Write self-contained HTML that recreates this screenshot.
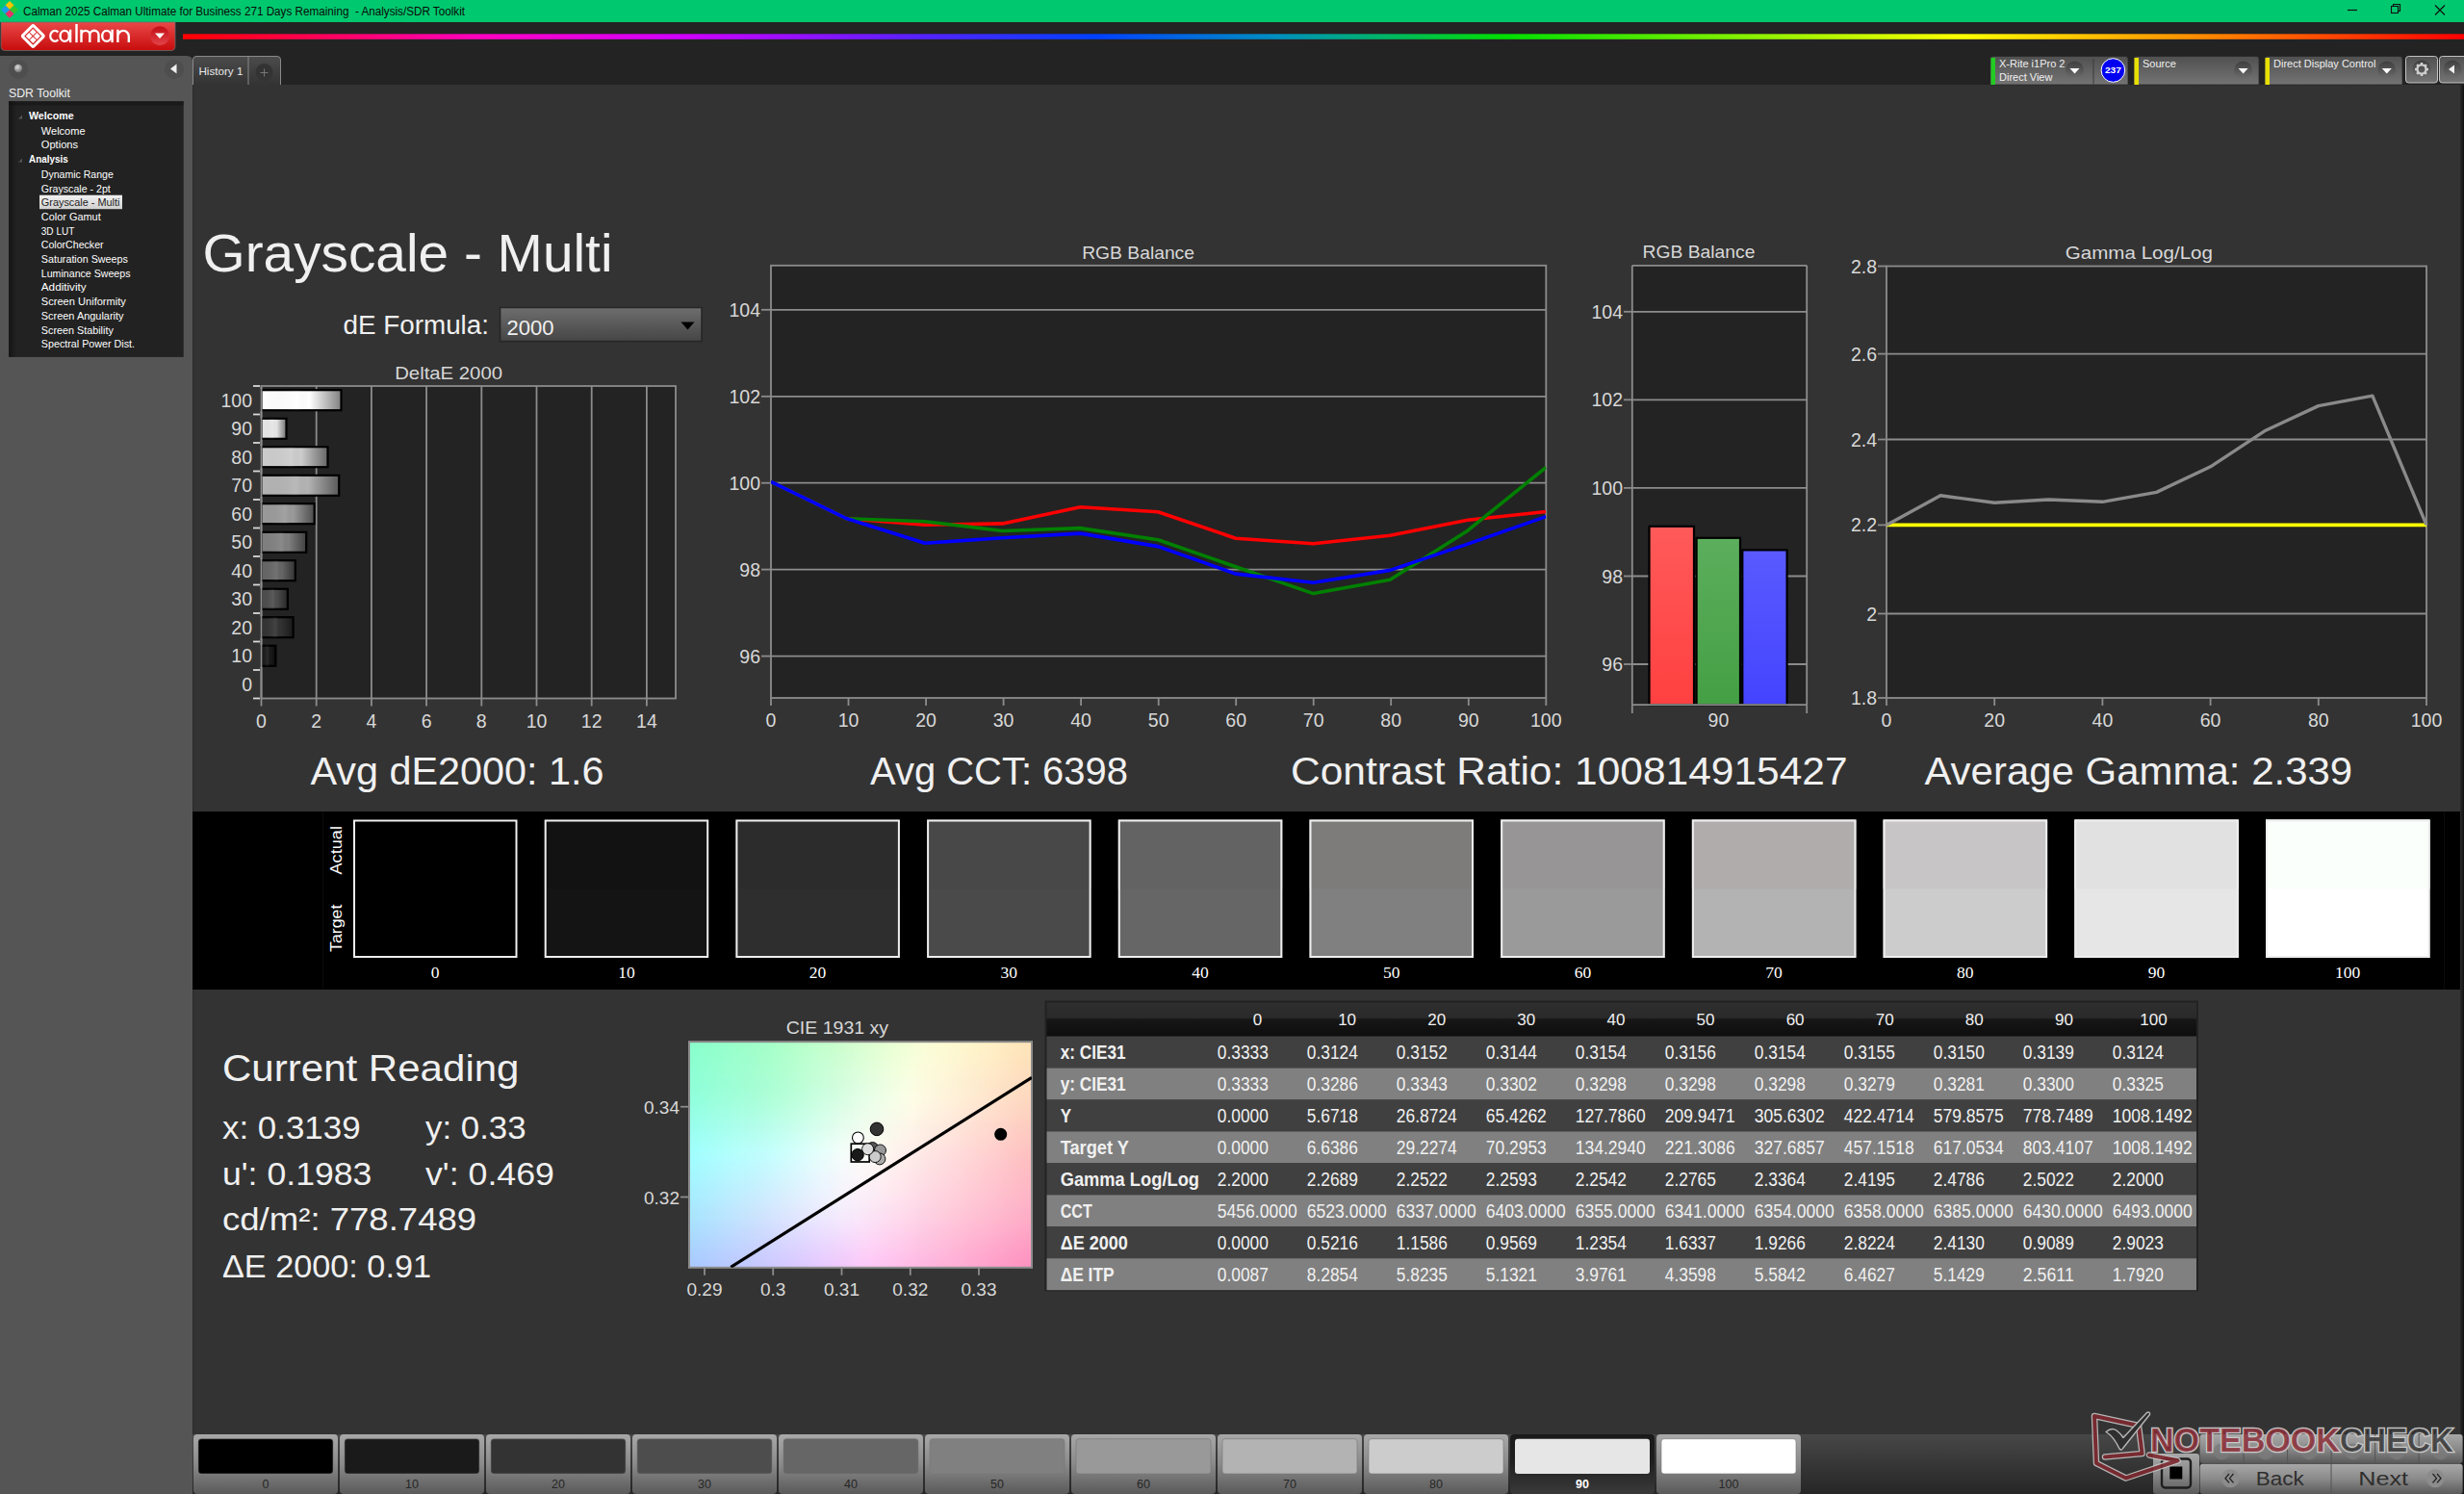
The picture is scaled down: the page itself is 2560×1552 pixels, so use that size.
<!DOCTYPE html>
<html><head><meta charset="utf-8"><style>
html,body{margin:0;padding:0;width:2560px;height:1552px;overflow:hidden;background:#333;}
svg{display:block;font-family:"Liberation Sans", sans-serif;}
.cie{width:356px;height:235px;background:
radial-gradient(ellipse 90px 70px at 47% 52%, rgba(255,255,255,1), rgba(255,255,255,0)),
radial-gradient(ellipse 130px 110px at 100% 100%, rgba(255,140,190,1), rgba(255,140,190,0)),
radial-gradient(ellipse 140px 100px at 75% 10%, rgba(255,255,200,1), rgba(255,255,200,0)),
radial-gradient(ellipse 120px 120px at 0% 0%, rgba(130,255,200,1), rgba(130,255,200,0)),
radial-gradient(ellipse 130px 110px at 0% 100%, rgba(170,200,255,1), rgba(170,200,255,0)),
linear-gradient(to right, #b0ffff 0%, #f0f0ff 45%, #ffc0d8 100%);}
</style></head><body>
<svg width="2560" height="1552" viewBox="0 0 2560 1552">

<defs>
<linearGradient id="rainbow" x1="0" y1="0" x2="1" y2="0">
 <stop offset="0" stop-color="#ff0000"/>
 <stop offset="0.13" stop-color="#ff00c0"/>
 <stop offset="0.22" stop-color="#d000ff"/>
 <stop offset="0.32" stop-color="#5a20ff"/>
 <stop offset="0.40" stop-color="#0040ff"/>
 <stop offset="0.48" stop-color="#0090c0"/>
 <stop offset="0.58" stop-color="#00e000"/>
 <stop offset="0.68" stop-color="#80f000"/>
 <stop offset="0.78" stop-color="#ffff00"/>
 <stop offset="0.88" stop-color="#ff9000"/>
 <stop offset="1" stop-color="#ff0000"/>
</linearGradient>
<linearGradient id="calred" x1="0" y1="0" x2="0" y2="1">
 <stop offset="0" stop-color="#e94848"/>
 <stop offset="1" stop-color="#c80c0c"/>
</linearGradient>
<linearGradient id="ddbox" x1="0" y1="0" x2="0" y2="1">
 <stop offset="0" stop-color="#6e6e6e"/>
 <stop offset="1" stop-color="#454545"/>
</linearGradient>
<linearGradient id="thead" x1="0" y1="0" x2="0" y2="1">
 <stop offset="0" stop-color="#2e2e2e"/>
 <stop offset="0.45" stop-color="#2a2a2a"/>
 <stop offset="0.5" stop-color="#161616"/>
 <stop offset="1" stop-color="#0e0e0e"/>
</linearGradient>
<linearGradient id="ctrl" x1="0" y1="0" x2="0" y2="1">
 <stop offset="0" stop-color="#505050"/>
 <stop offset="1" stop-color="#747474"/>
</linearGradient>
<linearGradient id="knobg" x1="0" y1="0" x2="0" y2="1">
 <stop offset="0" stop-color="#3e3e3e"/>
 <stop offset="1" stop-color="#6e6e6e"/>
</linearGradient>
<linearGradient id="btn" x1="0" y1="0" x2="0" y2="1">
 <stop offset="0" stop-color="#a8a8a8"/>
 <stop offset="0.5" stop-color="#8a8a8a"/>
 <stop offset="1" stop-color="#5a5a5a"/>
</linearGradient>
<linearGradient id="selbtn" x1="0" y1="0" x2="0" y2="1">
 <stop offset="0" stop-color="#1a1a1a"/>
 <stop offset="0.45" stop-color="#1f1f1f"/>
 <stop offset="1" stop-color="#3a3a3a"/>
</linearGradient>
<linearGradient id="tabg" x1="0" y1="0" x2="0" y2="1">
 <stop offset="0" stop-color="#4c4c4c"/>
 <stop offset="1" stop-color="#333333"/>
</linearGradient>
<linearGradient id="selitem" x1="0" y1="0" x2="0" y2="1">
 <stop offset="0" stop-color="#f2f2f2"/>
 <stop offset="1" stop-color="#cfcfcf"/>
</linearGradient>
<linearGradient id="treesh" x1="0" y1="0" x2="1" y2="0">
 <stop offset="0" stop-color="#111" stop-opacity="0.8"/>
 <stop offset="1" stop-color="#111" stop-opacity="0"/>
</linearGradient>
<linearGradient id="bbar" x1="0" y1="0" x2="0" y2="1">
 <stop offset="0" stop-color="#474747"/>
 <stop offset="1" stop-color="#262626"/>
</linearGradient>
<linearGradient id="barR" x1="0" y1="0" x2="0" y2="1"><stop offset="0" stop-color="#ff5a5a"/><stop offset="1" stop-color="#ff4040"/></linearGradient>
<linearGradient id="barG" x1="0" y1="0" x2="0" y2="1"><stop offset="0" stop-color="#5cae5c"/><stop offset="1" stop-color="#44a044"/></linearGradient>
<linearGradient id="barB" x1="0" y1="0" x2="0" y2="1"><stop offset="0" stop-color="#5a5aff"/><stop offset="1" stop-color="#4444ff"/></linearGradient>
<radialGradient id="knob" cx="0.5" cy="0.35" r="0.6">
 <stop offset="0" stop-color="#6a6a6a"/>
 <stop offset="1" stop-color="#3c3c3c"/>
</radialGradient>
<radialGradient id="ball" cx="0.4" cy="0.35" r="0.6">
 <stop offset="0" stop-color="#e0e0e0"/>
 <stop offset="1" stop-color="#777"/>
</radialGradient>
<linearGradient id="redknob" x1="0" y1="0" x2="0" y2="1">
 <stop offset="0" stop-color="#c20c14"/>
 <stop offset="1" stop-color="#e2444a"/>
</linearGradient>
<linearGradient id="rightstrip" x1="0" y1="0" x2="1" y2="0">
 <stop offset="0" stop-color="#2a2a2a"/>
 <stop offset="1" stop-color="#111"/>
</linearGradient>
</defs>

<defs><linearGradient id="bg100" x1="0" y1="0" x2="1" y2="0"><stop offset="0" stop-color="#000" stop-opacity="0"/><stop offset="0.45" stop-color="#fff" stop-opacity="0.08"/><stop offset="0.6" stop-color="#000" stop-opacity="0"/><stop offset="1" stop-color="#000" stop-opacity="0.5"/></linearGradient><linearGradient id="bg90" x1="0" y1="0" x2="1" y2="0"><stop offset="0" stop-color="#000" stop-opacity="0"/><stop offset="0.45" stop-color="#fff" stop-opacity="0.08"/><stop offset="0.6" stop-color="#000" stop-opacity="0"/><stop offset="1" stop-color="#000" stop-opacity="0.5"/></linearGradient><linearGradient id="bg80" x1="0" y1="0" x2="1" y2="0"><stop offset="0" stop-color="#000" stop-opacity="0"/><stop offset="0.45" stop-color="#fff" stop-opacity="0.08"/><stop offset="0.6" stop-color="#000" stop-opacity="0"/><stop offset="1" stop-color="#000" stop-opacity="0.5"/></linearGradient><linearGradient id="bg70" x1="0" y1="0" x2="1" y2="0"><stop offset="0" stop-color="#000" stop-opacity="0"/><stop offset="0.45" stop-color="#fff" stop-opacity="0.08"/><stop offset="0.6" stop-color="#000" stop-opacity="0"/><stop offset="1" stop-color="#000" stop-opacity="0.5"/></linearGradient><linearGradient id="bg60" x1="0" y1="0" x2="1" y2="0"><stop offset="0" stop-color="#000" stop-opacity="0"/><stop offset="0.45" stop-color="#fff" stop-opacity="0.08"/><stop offset="0.6" stop-color="#000" stop-opacity="0"/><stop offset="1" stop-color="#000" stop-opacity="0.5"/></linearGradient><linearGradient id="bg50" x1="0" y1="0" x2="1" y2="0"><stop offset="0" stop-color="#000" stop-opacity="0"/><stop offset="0.45" stop-color="#fff" stop-opacity="0.08"/><stop offset="0.6" stop-color="#000" stop-opacity="0"/><stop offset="1" stop-color="#000" stop-opacity="0.5"/></linearGradient><linearGradient id="bg40" x1="0" y1="0" x2="1" y2="0"><stop offset="0" stop-color="#000" stop-opacity="0"/><stop offset="0.45" stop-color="#fff" stop-opacity="0.08"/><stop offset="0.6" stop-color="#000" stop-opacity="0"/><stop offset="1" stop-color="#000" stop-opacity="0.5"/></linearGradient><linearGradient id="bg30" x1="0" y1="0" x2="1" y2="0"><stop offset="0" stop-color="#000" stop-opacity="0"/><stop offset="0.45" stop-color="#fff" stop-opacity="0.08"/><stop offset="0.6" stop-color="#000" stop-opacity="0"/><stop offset="1" stop-color="#000" stop-opacity="0.5"/></linearGradient><linearGradient id="bg20" x1="0" y1="0" x2="1" y2="0"><stop offset="0" stop-color="#000" stop-opacity="0"/><stop offset="0.45" stop-color="#fff" stop-opacity="0.08"/><stop offset="0.6" stop-color="#000" stop-opacity="0"/><stop offset="1" stop-color="#000" stop-opacity="0.5"/></linearGradient><linearGradient id="bg10" x1="0" y1="0" x2="1" y2="0"><stop offset="0" stop-color="#000" stop-opacity="0"/><stop offset="0.45" stop-color="#fff" stop-opacity="0.08"/><stop offset="0.6" stop-color="#000" stop-opacity="0"/><stop offset="1" stop-color="#000" stop-opacity="0.5"/></linearGradient></defs>
<rect x="0.0" y="0.0" width="2560.0" height="1552.0" fill="#333333"/>
<rect x="0.0" y="0.0" width="2560.0" height="23.0" fill="#00c86e"/>
<rect x="0.0" y="23.0" width="2560.0" height="65.0" fill="#232323"/>
<rect x="200.0" y="88.0" width="2356.0" height="1464.0" fill="#333333"/>
<rect x="2556.0" y="88.0" width="4.0" height="1464.0" fill="url(#rightstrip)"/>
<path d="M0,58 H194 Q200,58 200,64 V1552 H0 Z" fill="#555555"/>
<line x1="200.5" y1="88.0" x2="200.5" y2="1552.0" stroke="#2b2b2b" stroke-width="1"/>
<rect x="6.8" y="2.3" width="6.4" height="6.4" fill="#f5c400" transform="rotate(45 10 5.5)"/>
<rect x="2.3" y="6.8" width="6.4" height="6.4" fill="#1aa0e8" transform="rotate(45 5.5 10)"/>
<rect x="11.3" y="6.8" width="6.4" height="6.4" fill="#2ec82e" transform="rotate(45 14.5 10)"/>
<rect x="6.8" y="11.3" width="6.4" height="6.4" fill="#e8306a" transform="rotate(45 10 14.5)"/>
<text x="24.0" y="16.0" font-size="12" fill="#0a0a0a" textLength="459.0" lengthAdjust="spacingAndGlyphs">Calman 2025 Calman Ultimate for Business 271 Days Remaining  - Analysis/SDR Toolkit</text>
<line x1="2439.0" y1="10.5" x2="2449.0" y2="10.5" stroke="#111" stroke-width="1.2"/>
<rect x="2484.5" y="6.5" width="7" height="7" fill="none" stroke="#111" stroke-width="1.1"/>
<path d="M2486.5,6.5 V4.5 H2493.5 V11.5 H2491.5" fill="none" stroke="#111" stroke-width="1.1"/>
<path d="M2530,5.5 L2540,15.5 M2540,5.5 L2530,15.5" stroke="#111" stroke-width="1.2"/>
<path d="M1,23 H182 V48.5 Q182,52.5 178,52.5 H5 Q1,52.5 1,48.5 Z" fill="url(#calred)" stroke="#6a6a6a" stroke-width="0.8"/>
<g transform="translate(34.3,37.5) rotate(45)"><rect x="-8" y="-8" width="16" height="16" rx="1.2" fill="none" stroke="#fff" stroke-width="3"/><rect x="-5.3" y="-5.3" width="4.8" height="4.8" fill="#fff"/><rect x="0.5" y="-5.3" width="4.8" height="4.8" fill="#fff"/><rect x="-5.3" y="0.5" width="4.8" height="4.8" fill="#fff"/><rect x="0.5" y="0.5" width="4.8" height="4.8" fill="#fff"/></g>
<g fill="none" stroke="#fff" stroke-width="2.4"><path d="M60.3,33.6 A4.6,5.5 0 1 0 60.3,41.2"/><ellipse cx="67.2" cy="37.4" rx="4.6" ry="5.5"/><path d="M73.1,30.7 V44.1"/><path d="M79.5,25 V44.1"/><path d="M84.5,30.7 V44.1 M84.5,36.3 A4.4,4.4 0 0 1 93.3,36.3 V44.1 M93.3,36.3 A4.6,4.6 0 0 1 102.5,36.3 V44.1"/><ellipse cx="110.8" cy="37.4" rx="4.6" ry="5.5"/><path d="M116.6,30.7 V44.1"/><path d="M122.4,30.7 V44.1 M122.4,37.6 A5.7,5.7 0 0 1 133.8,37.6 V44.1"/></g>
<circle cx="166" cy="37.2" r="10" fill="url(#redknob)"/>
<path d="M161,34.5 H171 L166,40 Z" fill="#fff"/>
<rect x="190.0" y="35.3" width="2370.0" height="5.5" fill="url(#rainbow)"/>
<circle cx="19" cy="72" r="10" fill="#4e4e4e"/>
<circle cx="19" cy="71" r="4.2" fill="url(#ball)"/>
<circle cx="181" cy="72" r="10" fill="#4e4e4e"/>
<path d="M183.5,66.5 V76.5 L177,71.5 Z" fill="#f0f0f0"/>
<text x="9.0" y="100.7" font-size="12.5" fill="#f0f0f0" textLength="64.0" lengthAdjust="spacingAndGlyphs">SDR Toolkit</text>
<rect x="9.2" y="105.2" width="181.5" height="265.7" fill="#222222"/>
<rect x="9.2" y="105.2" width="181.5" height="4" fill="#151515" opacity="0.6"/>
<rect x="9.2" y="105.2" width="8" height="265.7" fill="url(#treesh)"/>
<path d="M19,123.5 H23 V119.5 Z" fill="#555"/>
<path d="M19,168.5 H23 V164.5 Z" fill="#555"/>
<text x="30.0" y="124.2" font-size="10.8" fill="#ffffff" font-weight="bold" textLength="46.6" lengthAdjust="spacingAndGlyphs">Welcome</text>
<text x="42.8" y="140.1" font-size="10.8" fill="#ffffff" textLength="45.8" lengthAdjust="spacingAndGlyphs">Welcome</text>
<text x="42.8" y="154.2" font-size="10.8" fill="#ffffff" textLength="38.3" lengthAdjust="spacingAndGlyphs">Options</text>
<text x="30.0" y="169.3" font-size="10.8" fill="#ffffff" font-weight="bold" textLength="40.7" lengthAdjust="spacingAndGlyphs">Analysis</text>
<text x="42.8" y="185.0" font-size="10.8" fill="#ffffff" textLength="75.0" lengthAdjust="spacingAndGlyphs">Dynamic Range</text>
<text x="42.8" y="199.7" font-size="10.8" fill="#ffffff" textLength="72.0" lengthAdjust="spacingAndGlyphs">Grayscale - 2pt</text>
<rect x="41.0" y="202.7" width="86.0" height="14.5" fill="url(#selitem)"/>
<text x="42.8" y="214.4" font-size="10.8" fill="#222" textLength="81.7" lengthAdjust="spacingAndGlyphs">Grayscale - Multi</text>
<text x="42.8" y="229.0" font-size="10.8" fill="#ffffff" textLength="61.9" lengthAdjust="spacingAndGlyphs">Color Gamut</text>
<text x="42.8" y="243.7" font-size="10.8" fill="#ffffff" textLength="34.5" lengthAdjust="spacingAndGlyphs">3D LUT</text>
<text x="42.8" y="258.4" font-size="10.8" fill="#ffffff" textLength="64.8" lengthAdjust="spacingAndGlyphs">ColorChecker</text>
<text x="42.8" y="273.1" font-size="10.8" fill="#ffffff" textLength="90.0" lengthAdjust="spacingAndGlyphs">Saturation Sweeps</text>
<text x="42.8" y="287.8" font-size="10.8" fill="#ffffff" textLength="92.7" lengthAdjust="spacingAndGlyphs">Luminance Sweeps</text>
<text x="42.8" y="302.4" font-size="10.8" fill="#ffffff" textLength="46.9" lengthAdjust="spacingAndGlyphs">Additivity</text>
<text x="42.8" y="317.1" font-size="10.8" fill="#ffffff" textLength="88.1" lengthAdjust="spacingAndGlyphs">Screen Uniformity</text>
<text x="42.8" y="331.8" font-size="10.8" fill="#ffffff" textLength="85.7" lengthAdjust="spacingAndGlyphs">Screen Angularity</text>
<text x="42.8" y="346.5" font-size="10.8" fill="#ffffff" textLength="75.0" lengthAdjust="spacingAndGlyphs">Screen Stability</text>
<text x="42.8" y="361.2" font-size="10.8" fill="#ffffff" textLength="97.2" lengthAdjust="spacingAndGlyphs">Spectral Power Dist.</text>
<path d="M200.5,88 V62 Q200.5,58.5 204,58.5 H288 Q291.5,58.5 291.5,62 V88" fill="url(#tabg)" stroke="#8a8a8a" stroke-width="1"/>
<line x1="258.0" y1="59.0" x2="258.0" y2="88.0" stroke="#8a8a8a" stroke-width="1"/>
<text x="206.4" y="78.0" font-size="11.5" fill="#e8e8e8" textLength="46.0" lengthAdjust="spacingAndGlyphs">History 1</text>
<circle cx="274.5" cy="75" r="9" fill="#333"/>
<path d="M270.5,75.5 H278.5 M274.5,71.5 V79.5" stroke="#777" stroke-width="1"/>
<path d="M2068,88 V61 Q2068,58.5 2071,58.5 H2208 Q2211,58.5 2211,61 V88 Z" fill="url(#ctrl)" stroke="#2a2a2a" stroke-width="0.8"/>
<rect x="2068.5" y="60.0" width="4.5" height="28.0" fill="#22cc22"/>
<text x="2077.0" y="69.8" font-size="11" fill="#f0f0f0">X-Rite i1Pro 2</text>
<text x="2077.0" y="83.6" font-size="11" fill="#f0f0f0">Direct View</text>
<circle cx="2155.5" cy="73" r="9.5" fill="url(#knobg)"/>
<path d="M2150.5,71 H2160.5 L2155.5,76.5 Z" fill="#fff"/>
<line x1="2175.0" y1="61.0" x2="2175.0" y2="87.0" stroke="#3a3a3a" stroke-width="1"/>
<circle cx="2195.4" cy="73" r="12.3" fill="#0000f0" stroke="#fff" stroke-width="1"/>
<text x="2195.4" y="76.4" font-size="9.5" fill="#fff" font-weight="bold" text-anchor="middle" textLength="17.0" lengthAdjust="spacingAndGlyphs">237</text>
<path d="M2217,88 V61 Q2217,58.5 2220,58.5 H2344 Q2347,58.5 2347,61 V88 Z" fill="url(#ctrl)" stroke="#2a2a2a" stroke-width="0.8"/>
<rect x="2217.5" y="60.0" width="4.5" height="28.0" fill="#e8e000"/>
<text x="2226.0" y="69.8" font-size="11" fill="#f0f0f0">Source</text>
<circle cx="2330.6" cy="73" r="9.5" fill="url(#knobg)"/>
<path d="M2325.6,71 H2335.6 L2330.6,76.5 Z" fill="#fff"/>
<path d="M2353,88 V61 Q2353,58.5 2356,58.5 H2493 Q2496,58.5 2496,61 V88 Z" fill="url(#ctrl)" stroke="#2a2a2a" stroke-width="0.8"/>
<rect x="2353.5" y="60.0" width="4.5" height="28.0" fill="#e8e000"/>
<text x="2362.0" y="69.8" font-size="11" fill="#f0f0f0">Direct Display Control</text>
<circle cx="2479.8" cy="73" r="9.5" fill="url(#knobg)"/>
<path d="M2474.8,71 H2484.8 L2479.8,76.5 Z" fill="#fff"/>
<rect x="2499.5" y="58.5" width="33" height="27.5" rx="3" fill="url(#ctrl)" stroke="#d0d0d0" stroke-width="0.9"/>
<circle cx="2516" cy="72" r="9.5" fill="url(#knobg)"/>
<rect x="2514.8" y="65" width="2.4" height="3" fill="#cfcfcf" transform="rotate(0 2516 72)"/>
<rect x="2514.8" y="65" width="2.4" height="3" fill="#cfcfcf" transform="rotate(45 2516 72)"/>
<rect x="2514.8" y="65" width="2.4" height="3" fill="#cfcfcf" transform="rotate(90 2516 72)"/>
<rect x="2514.8" y="65" width="2.4" height="3" fill="#cfcfcf" transform="rotate(135 2516 72)"/>
<rect x="2514.8" y="65" width="2.4" height="3" fill="#cfcfcf" transform="rotate(180 2516 72)"/>
<rect x="2514.8" y="65" width="2.4" height="3" fill="#cfcfcf" transform="rotate(225 2516 72)"/>
<rect x="2514.8" y="65" width="2.4" height="3" fill="#cfcfcf" transform="rotate(270 2516 72)"/>
<rect x="2514.8" y="65" width="2.4" height="3" fill="#cfcfcf" transform="rotate(315 2516 72)"/>
<circle cx="2516" cy="72" r="4.6" fill="none" stroke="#cfcfcf" stroke-width="2.4"/>
<rect x="2534.5" y="58.5" width="30" height="27.5" rx="3" fill="url(#ctrl)" stroke="#d0d0d0" stroke-width="0.9"/>
<circle cx="2548" cy="72" r="9.5" fill="url(#knobg)"/>
<path d="M2550,67.5 V76.5 L2544,72 Z" fill="#f0f0f0"/>
<text x="210.5" y="281.8" font-size="56.3" fill="#f0f0f0" textLength="426.0" lengthAdjust="spacingAndGlyphs">Grayscale - Multi</text>
<text x="356.5" y="347.2" font-size="27" fill="#f0f0f0" textLength="151.5" lengthAdjust="spacingAndGlyphs">dE Formula:</text>
<rect x="519.6" y="319.5" width="209.4" height="35.1" fill="url(#ddbox)" stroke="#262626" stroke-width="1.5"/>
<text x="526.6" y="348.4" font-size="22.5" fill="#f0f0f0" textLength="49.0" lengthAdjust="spacingAndGlyphs">2000</text>
<path d="M707.5,334.5 H721.5 L714.5,342.5 Z" fill="#000"/>
<text x="410.2" y="393.5" font-size="19" fill="#d8d8d8" textLength="111.8" lengthAdjust="spacingAndGlyphs">DeltaE 2000</text>
<rect x="271.5" y="401.0" width="430.5" height="324.5" fill="#232323"/>
<line x1="328.7" y1="401.0" x2="328.7" y2="725.5" stroke="#8c8c8c" stroke-width="1.8"/>
<line x1="385.9" y1="401.0" x2="385.9" y2="725.5" stroke="#8c8c8c" stroke-width="1.8"/>
<line x1="443.1" y1="401.0" x2="443.1" y2="725.5" stroke="#8c8c8c" stroke-width="1.8"/>
<line x1="500.3" y1="401.0" x2="500.3" y2="725.5" stroke="#8c8c8c" stroke-width="1.8"/>
<line x1="557.5" y1="401.0" x2="557.5" y2="725.5" stroke="#8c8c8c" stroke-width="1.8"/>
<line x1="614.7" y1="401.0" x2="614.7" y2="725.5" stroke="#8c8c8c" stroke-width="1.8"/>
<line x1="671.9" y1="401.0" x2="671.9" y2="725.5" stroke="#8c8c8c" stroke-width="1.8"/>
<rect x="271.5" y="401" width="430.5" height="324.5" fill="none" stroke="#8c8c8c" stroke-width="1.8"/>
<line x1="263.0" y1="401.0" x2="270.0" y2="401.0" stroke="#d8d8d8" stroke-width="1.8"/>
<text x="262.0" y="422.8" font-size="19.5" fill="#d8d8d8" text-anchor="end">100</text>
<rect x="271.5" y="405.2" width="83.0" height="21" fill="#ffffff" stroke="#000" stroke-width="2.2"/>
<rect x="271.5" y="405.2" width="83.0" height="21" fill="url(#bg100)"/>
<line x1="263.0" y1="430.5" x2="270.0" y2="430.5" stroke="#d8d8d8" stroke-width="1.8"/>
<text x="262.0" y="452.2" font-size="19.5" fill="#d8d8d8" text-anchor="end">90</text>
<rect x="271.5" y="434.8" width="26.0" height="21" fill="#e6e6e6" stroke="#000" stroke-width="2.2"/>
<rect x="271.5" y="434.8" width="26.0" height="21" fill="url(#bg90)"/>
<line x1="263.0" y1="460.0" x2="270.0" y2="460.0" stroke="#d8d8d8" stroke-width="1.8"/>
<text x="262.0" y="481.8" font-size="19.5" fill="#d8d8d8" text-anchor="end">80</text>
<rect x="271.5" y="464.2" width="69.0" height="21" fill="#cccccc" stroke="#000" stroke-width="2.2"/>
<rect x="271.5" y="464.2" width="69.0" height="21" fill="url(#bg80)"/>
<line x1="263.0" y1="489.5" x2="270.0" y2="489.5" stroke="#d8d8d8" stroke-width="1.8"/>
<text x="262.0" y="511.2" font-size="19.5" fill="#d8d8d8" text-anchor="end">70</text>
<rect x="271.5" y="493.8" width="80.7" height="21" fill="#b3b3b3" stroke="#000" stroke-width="2.2"/>
<rect x="271.5" y="493.8" width="80.7" height="21" fill="url(#bg70)"/>
<line x1="263.0" y1="519.0" x2="270.0" y2="519.0" stroke="#d8d8d8" stroke-width="1.8"/>
<text x="262.0" y="540.8" font-size="19.5" fill="#d8d8d8" text-anchor="end">60</text>
<rect x="271.5" y="523.2" width="55.1" height="21" fill="#9a9a9a" stroke="#000" stroke-width="2.2"/>
<rect x="271.5" y="523.2" width="55.1" height="21" fill="url(#bg60)"/>
<line x1="263.0" y1="548.5" x2="270.0" y2="548.5" stroke="#d8d8d8" stroke-width="1.8"/>
<text x="262.0" y="570.2" font-size="19.5" fill="#d8d8d8" text-anchor="end">50</text>
<rect x="271.5" y="552.8" width="46.7" height="21" fill="#808080" stroke="#000" stroke-width="2.2"/>
<rect x="271.5" y="552.8" width="46.7" height="21" fill="url(#bg50)"/>
<line x1="263.0" y1="578.0" x2="270.0" y2="578.0" stroke="#d8d8d8" stroke-width="1.8"/>
<text x="262.0" y="599.8" font-size="19.5" fill="#d8d8d8" text-anchor="end">40</text>
<rect x="271.5" y="582.2" width="35.3" height="21" fill="#666666" stroke="#000" stroke-width="2.2"/>
<rect x="271.5" y="582.2" width="35.3" height="21" fill="url(#bg40)"/>
<line x1="263.0" y1="607.5" x2="270.0" y2="607.5" stroke="#d8d8d8" stroke-width="1.8"/>
<text x="262.0" y="629.2" font-size="19.5" fill="#d8d8d8" text-anchor="end">30</text>
<rect x="271.5" y="611.8" width="27.4" height="21" fill="#4d4d4d" stroke="#000" stroke-width="2.2"/>
<rect x="271.5" y="611.8" width="27.4" height="21" fill="url(#bg30)"/>
<line x1="263.0" y1="637.0" x2="270.0" y2="637.0" stroke="#d8d8d8" stroke-width="1.8"/>
<text x="262.0" y="658.8" font-size="19.5" fill="#d8d8d8" text-anchor="end">20</text>
<rect x="271.5" y="641.2" width="33.1" height="21" fill="#333333" stroke="#000" stroke-width="2.2"/>
<rect x="271.5" y="641.2" width="33.1" height="21" fill="url(#bg20)"/>
<line x1="263.0" y1="666.5" x2="270.0" y2="666.5" stroke="#d8d8d8" stroke-width="1.8"/>
<text x="262.0" y="688.2" font-size="19.5" fill="#d8d8d8" text-anchor="end">10</text>
<rect x="271.5" y="670.8" width="14.9" height="21" fill="#1a1a1a" stroke="#000" stroke-width="2.2"/>
<rect x="271.5" y="670.8" width="14.9" height="21" fill="url(#bg10)"/>
<line x1="263.0" y1="696.0" x2="270.0" y2="696.0" stroke="#d8d8d8" stroke-width="1.8"/>
<text x="262.0" y="717.8" font-size="19.5" fill="#d8d8d8" text-anchor="end">0</text>
<line x1="263.0" y1="725.5" x2="270.0" y2="725.5" stroke="#d8d8d8" stroke-width="1.8"/>
<line x1="271.5" y1="401.0" x2="271.5" y2="725.5" stroke="#8c8c8c" stroke-width="1.8"/>
<line x1="271.5" y1="725.5" x2="271.5" y2="733.5" stroke="#8c8c8c" stroke-width="1.8"/>
<text x="271.5" y="756.0" font-size="19.5" fill="#d8d8d8" text-anchor="middle">0</text>
<line x1="328.7" y1="725.5" x2="328.7" y2="733.5" stroke="#8c8c8c" stroke-width="1.8"/>
<text x="328.7" y="756.0" font-size="19.5" fill="#d8d8d8" text-anchor="middle">2</text>
<line x1="385.9" y1="725.5" x2="385.9" y2="733.5" stroke="#8c8c8c" stroke-width="1.8"/>
<text x="385.9" y="756.0" font-size="19.5" fill="#d8d8d8" text-anchor="middle">4</text>
<line x1="443.1" y1="725.5" x2="443.1" y2="733.5" stroke="#8c8c8c" stroke-width="1.8"/>
<text x="443.1" y="756.0" font-size="19.5" fill="#d8d8d8" text-anchor="middle">6</text>
<line x1="500.3" y1="725.5" x2="500.3" y2="733.5" stroke="#8c8c8c" stroke-width="1.8"/>
<text x="500.3" y="756.0" font-size="19.5" fill="#d8d8d8" text-anchor="middle">8</text>
<line x1="557.5" y1="725.5" x2="557.5" y2="733.5" stroke="#8c8c8c" stroke-width="1.8"/>
<text x="557.5" y="756.0" font-size="19.5" fill="#d8d8d8" text-anchor="middle">10</text>
<line x1="614.7" y1="725.5" x2="614.7" y2="733.5" stroke="#8c8c8c" stroke-width="1.8"/>
<text x="614.7" y="756.0" font-size="19.5" fill="#d8d8d8" text-anchor="middle">12</text>
<line x1="671.9" y1="725.5" x2="671.9" y2="733.5" stroke="#8c8c8c" stroke-width="1.8"/>
<text x="671.9" y="756.0" font-size="19.5" fill="#d8d8d8" text-anchor="middle">14</text>
<text x="1124.2" y="268.5" font-size="19" fill="#d8d8d8" textLength="116.8" lengthAdjust="spacingAndGlyphs">RGB Balance</text>
<rect x="801.0" y="275.8" width="805.3" height="449.2" fill="#232323"/>
<line x1="801.0" y1="321.8" x2="1606.3" y2="321.8" stroke="#8c8c8c" stroke-width="1.8"/>
<line x1="791.0" y1="321.8" x2="801.0" y2="321.8" stroke="#8c8c8c" stroke-width="1.8"/>
<text x="790.0" y="328.8" font-size="19.5" fill="#d8d8d8" text-anchor="end">104</text>
<line x1="801.0" y1="411.8" x2="1606.3" y2="411.8" stroke="#8c8c8c" stroke-width="1.8"/>
<line x1="791.0" y1="411.8" x2="801.0" y2="411.8" stroke="#8c8c8c" stroke-width="1.8"/>
<text x="790.0" y="418.8" font-size="19.5" fill="#d8d8d8" text-anchor="end">102</text>
<line x1="801.0" y1="501.7" x2="1606.3" y2="501.7" stroke="#8c8c8c" stroke-width="1.8"/>
<line x1="791.0" y1="501.7" x2="801.0" y2="501.7" stroke="#8c8c8c" stroke-width="1.8"/>
<text x="790.0" y="508.7" font-size="19.5" fill="#d8d8d8" text-anchor="end">100</text>
<line x1="801.0" y1="591.6" x2="1606.3" y2="591.6" stroke="#8c8c8c" stroke-width="1.8"/>
<line x1="791.0" y1="591.6" x2="801.0" y2="591.6" stroke="#8c8c8c" stroke-width="1.8"/>
<text x="790.0" y="598.6" font-size="19.5" fill="#d8d8d8" text-anchor="end">98</text>
<line x1="801.0" y1="681.6" x2="1606.3" y2="681.6" stroke="#8c8c8c" stroke-width="1.8"/>
<line x1="791.0" y1="681.6" x2="801.0" y2="681.6" stroke="#8c8c8c" stroke-width="1.8"/>
<text x="790.0" y="688.6" font-size="19.5" fill="#d8d8d8" text-anchor="end">96</text>
<rect x="801" y="275.8" width="805.3" height="449.2" fill="none" stroke="#8c8c8c" stroke-width="1.8"/>
<line x1="801.0" y1="725.0" x2="801.0" y2="733.0" stroke="#8c8c8c" stroke-width="1.8"/>
<text x="801.0" y="755.0" font-size="19.5" fill="#d8d8d8" text-anchor="middle">0</text>
<line x1="881.5" y1="725.0" x2="881.5" y2="733.0" stroke="#8c8c8c" stroke-width="1.8"/>
<text x="881.5" y="755.0" font-size="19.5" fill="#d8d8d8" text-anchor="middle">10</text>
<line x1="962.1" y1="725.0" x2="962.1" y2="733.0" stroke="#8c8c8c" stroke-width="1.8"/>
<text x="962.1" y="755.0" font-size="19.5" fill="#d8d8d8" text-anchor="middle">20</text>
<line x1="1042.6" y1="725.0" x2="1042.6" y2="733.0" stroke="#8c8c8c" stroke-width="1.8"/>
<text x="1042.6" y="755.0" font-size="19.5" fill="#d8d8d8" text-anchor="middle">30</text>
<line x1="1123.1" y1="725.0" x2="1123.1" y2="733.0" stroke="#8c8c8c" stroke-width="1.8"/>
<text x="1123.1" y="755.0" font-size="19.5" fill="#d8d8d8" text-anchor="middle">40</text>
<line x1="1203.7" y1="725.0" x2="1203.7" y2="733.0" stroke="#8c8c8c" stroke-width="1.8"/>
<text x="1203.7" y="755.0" font-size="19.5" fill="#d8d8d8" text-anchor="middle">50</text>
<line x1="1284.2" y1="725.0" x2="1284.2" y2="733.0" stroke="#8c8c8c" stroke-width="1.8"/>
<text x="1284.2" y="755.0" font-size="19.5" fill="#d8d8d8" text-anchor="middle">60</text>
<line x1="1364.7" y1="725.0" x2="1364.7" y2="733.0" stroke="#8c8c8c" stroke-width="1.8"/>
<text x="1364.7" y="755.0" font-size="19.5" fill="#d8d8d8" text-anchor="middle">70</text>
<line x1="1445.2" y1="725.0" x2="1445.2" y2="733.0" stroke="#8c8c8c" stroke-width="1.8"/>
<text x="1445.2" y="755.0" font-size="19.5" fill="#d8d8d8" text-anchor="middle">80</text>
<line x1="1525.8" y1="725.0" x2="1525.8" y2="733.0" stroke="#8c8c8c" stroke-width="1.8"/>
<text x="1525.8" y="755.0" font-size="19.5" fill="#d8d8d8" text-anchor="middle">90</text>
<line x1="1606.3" y1="725.0" x2="1606.3" y2="733.0" stroke="#8c8c8c" stroke-width="1.8"/>
<text x="1606.3" y="755.0" font-size="19.5" fill="#d8d8d8" text-anchor="middle">100</text>
<clipPath id="clipRGB"><rect x="801" y="275.8" width="805.3" height="449.2"/></clipPath>
<g clip-path="url(#clipRGB)" fill="none" stroke-width="3.6" stroke-linejoin="round">
<polyline points="801.0,500.4 879.9,538.8 961.0,545.3 1041.7,543.9 1122.4,526.7 1203.1,531.8 1283.8,559.2 1364.5,564.7 1444.2,556.3 1524.9,540.2 1606.3,531.5" stroke="#ff0000"/>
<polyline points="801.0,500.4 879.9,538.8 961.0,541.7 1041.7,551.5 1122.4,548.6 1203.1,560.7 1283.8,588.8 1364.5,616.6 1444.2,602.3 1524.9,551.2 1606.3,485.4" stroke="#008000"/>
<polyline points="801.0,500.4 879.9,538.8 961.0,564.3 1041.7,558.8 1122.4,554.1 1203.1,567.6 1283.8,596.1 1364.5,605.2 1444.2,592.4 1524.9,565.1 1606.3,536.6" stroke="#0000ff"/>
</g>
<text x="1706.6" y="268.2" font-size="19" fill="#d8d8d8" textLength="116.8" lengthAdjust="spacingAndGlyphs">RGB Balance</text>
<rect x="1695.8" y="275.8" width="181.4" height="456.4" fill="#232323"/>
<line x1="1695.8" y1="323.8" x2="1877.2" y2="323.8" stroke="#8c8c8c" stroke-width="1.8"/>
<line x1="1687.0" y1="323.8" x2="1695.8" y2="323.8" stroke="#8c8c8c" stroke-width="1.8"/>
<text x="1686.0" y="330.8" font-size="19.5" fill="#d8d8d8" text-anchor="end">104</text>
<line x1="1695.8" y1="415.3" x2="1877.2" y2="415.3" stroke="#8c8c8c" stroke-width="1.8"/>
<line x1="1687.0" y1="415.3" x2="1695.8" y2="415.3" stroke="#8c8c8c" stroke-width="1.8"/>
<text x="1686.0" y="422.3" font-size="19.5" fill="#d8d8d8" text-anchor="end">102</text>
<line x1="1695.8" y1="506.9" x2="1877.2" y2="506.9" stroke="#8c8c8c" stroke-width="1.8"/>
<line x1="1687.0" y1="506.9" x2="1695.8" y2="506.9" stroke="#8c8c8c" stroke-width="1.8"/>
<text x="1686.0" y="513.9" font-size="19.5" fill="#d8d8d8" text-anchor="end">100</text>
<line x1="1695.8" y1="598.5" x2="1877.2" y2="598.5" stroke="#8c8c8c" stroke-width="1.8"/>
<line x1="1687.0" y1="598.5" x2="1695.8" y2="598.5" stroke="#8c8c8c" stroke-width="1.8"/>
<text x="1686.0" y="605.5" font-size="19.5" fill="#d8d8d8" text-anchor="end">98</text>
<line x1="1695.8" y1="690.0" x2="1877.2" y2="690.0" stroke="#8c8c8c" stroke-width="1.8"/>
<line x1="1687.0" y1="690.0" x2="1695.8" y2="690.0" stroke="#8c8c8c" stroke-width="1.8"/>
<text x="1686.0" y="697.0" font-size="19.5" fill="#d8d8d8" text-anchor="end">96</text>
<rect x="1713.5" y="546.8" width="46.5" height="185.4" fill="url(#barR)" stroke="#000" stroke-width="2.2"/>
<rect x="1762.6" y="558.8" width="45.4" height="173.4" fill="url(#barG)" stroke="#000" stroke-width="2.2"/>
<rect x="1810.3" y="571.4" width="46.3" height="160.8" fill="url(#barB)" stroke="#000" stroke-width="2.2"/>
<path d="M1695.8,275.8 V732.2 M1877.2,275.8 V732.2 M1695.8,275.8 H1877.2" fill="none" stroke="#8c8c8c" stroke-width="1.8"/>
<line x1="1695.8" y1="732.2" x2="1877.2" y2="732.2" stroke="#8c8c8c" stroke-width="1.8"/>
<line x1="1695.8" y1="732.2" x2="1695.8" y2="741.0" stroke="#8c8c8c" stroke-width="1.8"/>
<line x1="1877.2" y1="732.2" x2="1877.2" y2="741.0" stroke="#8c8c8c" stroke-width="1.8"/>
<text x="1785.4" y="755.0" font-size="19.5" fill="#d8d8d8" text-anchor="middle">90</text>
<text x="2145.8" y="268.9" font-size="19" fill="#d8d8d8" textLength="153.2" lengthAdjust="spacingAndGlyphs">Gamma Log/Log</text>
<rect x="1960.0" y="276.5" width="561.0" height="448.5" fill="#232323"/>
<line x1="1951.0" y1="276.5" x2="1960.0" y2="276.5" stroke="#8c8c8c" stroke-width="1.8"/>
<text x="1950.0" y="283.5" font-size="19.5" fill="#d8d8d8" text-anchor="end">2.8</text>
<line x1="1960.0" y1="367.6" x2="2521.0" y2="367.6" stroke="#8c8c8c" stroke-width="1.8"/>
<line x1="1951.0" y1="367.6" x2="1960.0" y2="367.6" stroke="#8c8c8c" stroke-width="1.8"/>
<text x="1950.0" y="374.6" font-size="19.5" fill="#d8d8d8" text-anchor="end">2.6</text>
<line x1="1960.0" y1="456.5" x2="2521.0" y2="456.5" stroke="#8c8c8c" stroke-width="1.8"/>
<line x1="1951.0" y1="456.5" x2="1960.0" y2="456.5" stroke="#8c8c8c" stroke-width="1.8"/>
<text x="1950.0" y="463.5" font-size="19.5" fill="#d8d8d8" text-anchor="end">2.4</text>
<line x1="1960.0" y1="545.4" x2="2521.0" y2="545.4" stroke="#8c8c8c" stroke-width="1.8"/>
<line x1="1951.0" y1="545.4" x2="1960.0" y2="545.4" stroke="#8c8c8c" stroke-width="1.8"/>
<text x="1950.0" y="552.4" font-size="19.5" fill="#d8d8d8" text-anchor="end">2.2</text>
<line x1="1960.0" y1="637.5" x2="2521.0" y2="637.5" stroke="#8c8c8c" stroke-width="1.8"/>
<line x1="1951.0" y1="637.5" x2="1960.0" y2="637.5" stroke="#8c8c8c" stroke-width="1.8"/>
<text x="1950.0" y="644.5" font-size="19.5" fill="#d8d8d8" text-anchor="end">2</text>
<line x1="1951.0" y1="725.0" x2="1960.0" y2="725.0" stroke="#8c8c8c" stroke-width="1.8"/>
<text x="1950.0" y="732.0" font-size="19.5" fill="#d8d8d8" text-anchor="end">1.8</text>
<rect x="1960" y="276.5" width="561" height="448.5" fill="none" stroke="#8c8c8c" stroke-width="1.8"/>
<line x1="1960.0" y1="725.0" x2="1960.0" y2="733.0" stroke="#8c8c8c" stroke-width="1.8"/>
<text x="1960.0" y="755.0" font-size="19.5" fill="#d8d8d8" text-anchor="middle">0</text>
<line x1="2072.2" y1="725.0" x2="2072.2" y2="733.0" stroke="#8c8c8c" stroke-width="1.8"/>
<text x="2072.2" y="755.0" font-size="19.5" fill="#d8d8d8" text-anchor="middle">20</text>
<line x1="2184.4" y1="725.0" x2="2184.4" y2="733.0" stroke="#8c8c8c" stroke-width="1.8"/>
<text x="2184.4" y="755.0" font-size="19.5" fill="#d8d8d8" text-anchor="middle">40</text>
<line x1="2296.6" y1="725.0" x2="2296.6" y2="733.0" stroke="#8c8c8c" stroke-width="1.8"/>
<text x="2296.6" y="755.0" font-size="19.5" fill="#d8d8d8" text-anchor="middle">60</text>
<line x1="2408.8" y1="725.0" x2="2408.8" y2="733.0" stroke="#8c8c8c" stroke-width="1.8"/>
<text x="2408.8" y="755.0" font-size="19.5" fill="#d8d8d8" text-anchor="middle">80</text>
<line x1="2521.0" y1="725.0" x2="2521.0" y2="733.0" stroke="#8c8c8c" stroke-width="1.8"/>
<text x="2521.0" y="755.0" font-size="19.5" fill="#d8d8d8" text-anchor="middle">100</text>
<line x1="1960.0" y1="545.4" x2="2521.0" y2="545.4" stroke="#ffff00" stroke-width="3.6"/>
<polyline points="1960.0,545.4 2016.1,514.8 2072.2,522.2 2128.3,519.0 2184.4,521.3 2240.5,511.4 2296.6,484.8 2352.7,447.8 2408.8,421.6 2464.9,411.1 2521.0,545.4" fill="none" stroke="#8a8a8a" stroke-width="3.4" stroke-linejoin="round"/>
<text x="322.5" y="815.0" font-size="41" fill="#f0f0f0" textLength="305.0" lengthAdjust="spacingAndGlyphs">Avg dE2000: 1.6</text>
<text x="904.0" y="815.0" font-size="41" fill="#f0f0f0" textLength="268.0" lengthAdjust="spacingAndGlyphs">Avg CCT: 6398</text>
<text x="1341.0" y="815.0" font-size="41" fill="#f0f0f0" textLength="578.5" lengthAdjust="spacingAndGlyphs">Contrast Ratio: 100814915427</text>
<text x="1999.4" y="815.0" font-size="41" fill="#f0f0f0" textLength="444.8" lengthAdjust="spacingAndGlyphs">Average Gamma: 2.339</text>
<rect x="200.0" y="843.0" width="2356.0" height="185.0" fill="#000"/>
<line x1="335.5" y1="843.0" x2="335.5" y2="1028.0" stroke="#0c0c0c" stroke-width="1"/>
<line x1="2539.5" y1="843.0" x2="2539.5" y2="1028.0" stroke="#0c0c0c" stroke-width="1"/>
<rect x="367.0" y="851.5" width="170.5" height="143.5" fill="#000000"/>
<rect x="367.0" y="851.5" width="170.5" height="72.0" fill="#000000"/>
<rect x="368.0" y="852.5" width="168.5" height="141.5" fill="none" stroke="#eeeeee" stroke-width="2"/>
<text x="452.2" y="1016" font-size="17.5" fill="#fff" text-anchor="middle" font-family="Liberation Serif, serif">0</text>
<rect x="565.7" y="851.5" width="170.5" height="143.5" fill="#141414"/>
<rect x="565.7" y="851.5" width="170.5" height="72.0" fill="#121212"/>
<rect x="566.7" y="852.5" width="168.5" height="141.5" fill="none" stroke="#eeeeee" stroke-width="2"/>
<text x="651.0" y="1016" font-size="17.5" fill="#fff" text-anchor="middle" font-family="Liberation Serif, serif">10</text>
<rect x="764.4" y="851.5" width="170.5" height="143.5" fill="#2e2e2e"/>
<rect x="764.4" y="851.5" width="170.5" height="72.0" fill="#2c2c2c"/>
<rect x="765.4" y="852.5" width="168.5" height="141.5" fill="none" stroke="#eeeeee" stroke-width="2"/>
<text x="849.6" y="1016" font-size="17.5" fill="#fff" text-anchor="middle" font-family="Liberation Serif, serif">20</text>
<rect x="963.1" y="851.5" width="170.5" height="143.5" fill="#4a4a4a"/>
<rect x="963.1" y="851.5" width="170.5" height="72.0" fill="#484848"/>
<rect x="964.1" y="852.5" width="168.5" height="141.5" fill="none" stroke="#eeeeee" stroke-width="2"/>
<text x="1048.3" y="1016" font-size="17.5" fill="#fff" text-anchor="middle" font-family="Liberation Serif, serif">30</text>
<rect x="1161.8" y="851.5" width="170.5" height="143.5" fill="#666666"/>
<rect x="1161.8" y="851.5" width="170.5" height="72.0" fill="#636363"/>
<rect x="1162.8" y="852.5" width="168.5" height="141.5" fill="none" stroke="#eeeeee" stroke-width="2"/>
<text x="1247.0" y="1016" font-size="17.5" fill="#fff" text-anchor="middle" font-family="Liberation Serif, serif">40</text>
<rect x="1360.5" y="851.5" width="170.5" height="143.5" fill="#808080"/>
<rect x="1360.5" y="851.5" width="170.5" height="72.0" fill="#7d7c7a"/>
<rect x="1361.5" y="852.5" width="168.5" height="141.5" fill="none" stroke="#eeeeee" stroke-width="2"/>
<text x="1445.8" y="1016" font-size="17.5" fill="#fff" text-anchor="middle" font-family="Liberation Serif, serif">50</text>
<rect x="1559.2" y="851.5" width="170.5" height="143.5" fill="#9a9a9a"/>
<rect x="1559.2" y="851.5" width="170.5" height="72.0" fill="#979595"/>
<rect x="1560.2" y="852.5" width="168.5" height="141.5" fill="none" stroke="#eeeeee" stroke-width="2"/>
<text x="1644.4" y="1016" font-size="17.5" fill="#fff" text-anchor="middle" font-family="Liberation Serif, serif">60</text>
<rect x="1757.9" y="851.5" width="170.5" height="143.5" fill="#b3b3b3"/>
<rect x="1757.9" y="851.5" width="170.5" height="72.0" fill="#b0acac"/>
<rect x="1758.9" y="852.5" width="168.5" height="141.5" fill="none" stroke="#eeeeee" stroke-width="2"/>
<text x="1843.1" y="1016" font-size="17.5" fill="#fff" text-anchor="middle" font-family="Liberation Serif, serif">70</text>
<rect x="1956.6" y="851.5" width="170.5" height="143.5" fill="#cccccc"/>
<rect x="1956.6" y="851.5" width="170.5" height="72.0" fill="#c8c5c6"/>
<rect x="1957.6" y="852.5" width="168.5" height="141.5" fill="none" stroke="#eeeeee" stroke-width="2"/>
<text x="2041.8" y="1016" font-size="17.5" fill="#fff" text-anchor="middle" font-family="Liberation Serif, serif">80</text>
<rect x="2155.3" y="851.5" width="170.5" height="143.5" fill="#e6e6e6"/>
<rect x="2155.3" y="851.5" width="170.5" height="72.0" fill="#e2e1e1"/>
<rect x="2156.3" y="852.5" width="168.5" height="141.5" fill="none" stroke="#eeeeee" stroke-width="2"/>
<text x="2240.6" y="1016" font-size="17.5" fill="#fff" text-anchor="middle" font-family="Liberation Serif, serif">90</text>
<rect x="2354.0" y="851.5" width="170.5" height="143.5" fill="#ffffff"/>
<rect x="2354.0" y="851.5" width="170.5" height="72.0" fill="#fafffc"/>
<rect x="2355.0" y="852.5" width="168.5" height="141.5" fill="none" stroke="#eeeeee" stroke-width="2"/>
<text x="2439.2" y="1016" font-size="17.5" fill="#fff" text-anchor="middle" font-family="Liberation Serif, serif">100</text>
<text transform="translate(355,908.5) rotate(-90)" font-size="17" fill="#fff" textLength="50.5" lengthAdjust="spacingAndGlyphs">Actual</text>
<text transform="translate(355,989) rotate(-90)" font-size="17" fill="#fff" textLength="49.4" lengthAdjust="spacingAndGlyphs">Target</text>
<text x="231.0" y="1122.5" font-size="38.5" fill="#f0f0f0" textLength="308.5" lengthAdjust="spacingAndGlyphs">Current Reading</text>
<text x="231.0" y="1182.5" font-size="32.8" fill="#f0f0f0" textLength="143.6" lengthAdjust="spacingAndGlyphs">x: 0.3139</text>
<text x="442.0" y="1182.5" font-size="32.8" fill="#f0f0f0" textLength="104.6" lengthAdjust="spacingAndGlyphs">y: 0.33</text>
<text x="231.0" y="1230.7" font-size="32.8" fill="#f0f0f0" textLength="155.4" lengthAdjust="spacingAndGlyphs">u': 0.1983</text>
<text x="442.0" y="1230.7" font-size="32.8" fill="#f0f0f0" textLength="134.0" lengthAdjust="spacingAndGlyphs">v': 0.469</text>
<text x="231.0" y="1278.2" font-size="32.8" fill="#f0f0f0" textLength="264.2" lengthAdjust="spacingAndGlyphs">cd/m²: 778.7489</text>
<text x="231.0" y="1327.0" font-size="32.8" fill="#f0f0f0" textLength="217.0" lengthAdjust="spacingAndGlyphs">ΔE 2000: 0.91</text>
<text x="816.7" y="1074.3" font-size="19" fill="#d8d8d8" textLength="106.4" lengthAdjust="spacingAndGlyphs">CIE 1931 xy</text>
<clipPath id="clipCIEbg"><rect x="716" y="1082.2" width="356" height="234.5999999999999"/></clipPath>
<filter id="cieblur" x="-10%" y="-10%" width="120%" height="120%"><feGaussianBlur stdDeviation="5"/></filter>
<g clip-path="url(#clipCIEbg)"><g filter="url(#cieblur)">
<rect x="706.1" y="1072.4" width="10.5" height="10.4" fill="#88ffcc"/>
<rect x="716.0" y="1072.4" width="10.5" height="10.4" fill="#89ffcb"/>
<rect x="725.9" y="1072.4" width="10.5" height="10.4" fill="#8dffcb"/>
<rect x="735.8" y="1072.4" width="10.5" height="10.4" fill="#90ffca"/>
<rect x="745.7" y="1072.4" width="10.5" height="10.4" fill="#94ffca"/>
<rect x="755.6" y="1072.4" width="10.5" height="10.4" fill="#98ffca"/>
<rect x="765.4" y="1072.4" width="10.5" height="10.4" fill="#9bffc9"/>
<rect x="775.3" y="1072.4" width="10.5" height="10.4" fill="#9fffc9"/>
<rect x="785.2" y="1072.4" width="10.5" height="10.4" fill="#a2ffc8"/>
<rect x="795.1" y="1072.4" width="10.5" height="10.4" fill="#a6ffc8"/>
<rect x="805.0" y="1072.4" width="10.5" height="10.4" fill="#aaffc8"/>
<rect x="814.9" y="1072.4" width="10.5" height="10.4" fill="#b0ffc9"/>
<rect x="824.8" y="1072.4" width="10.5" height="10.4" fill="#b5ffca"/>
<rect x="834.7" y="1072.4" width="10.5" height="10.4" fill="#baffcb"/>
<rect x="844.6" y="1072.4" width="10.5" height="10.4" fill="#c0ffcc"/>
<rect x="854.4" y="1072.4" width="10.5" height="10.4" fill="#c5ffcc"/>
<rect x="864.3" y="1072.4" width="10.5" height="10.4" fill="#caffcd"/>
<rect x="874.2" y="1072.4" width="10.5" height="10.4" fill="#d0ffce"/>
<rect x="884.1" y="1072.4" width="10.5" height="10.4" fill="#d5ffcf"/>
<rect x="894.0" y="1072.4" width="10.5" height="10.4" fill="#daffd0"/>
<rect x="903.9" y="1072.4" width="10.5" height="10.4" fill="#dfffd1"/>
<rect x="913.8" y="1072.4" width="10.5" height="10.4" fill="#e4ffd2"/>
<rect x="923.7" y="1072.4" width="10.5" height="10.4" fill="#e9ffd3"/>
<rect x="933.6" y="1072.4" width="10.5" height="10.4" fill="#eeffd5"/>
<rect x="943.4" y="1072.4" width="10.5" height="10.4" fill="#f3ffd6"/>
<rect x="953.3" y="1072.4" width="10.5" height="10.4" fill="#f8ffd7"/>
<rect x="963.2" y="1072.4" width="10.5" height="10.4" fill="#fcfed7"/>
<rect x="973.1" y="1072.4" width="10.5" height="10.4" fill="#fcfcd4"/>
<rect x="983.0" y="1072.4" width="10.5" height="10.4" fill="#fdfad1"/>
<rect x="992.9" y="1072.4" width="10.5" height="10.4" fill="#fdf8ce"/>
<rect x="1002.8" y="1072.4" width="10.5" height="10.4" fill="#fef6cb"/>
<rect x="1012.7" y="1072.4" width="10.5" height="10.4" fill="#fef4c8"/>
<rect x="1022.6" y="1072.4" width="10.5" height="10.4" fill="#fff1c5"/>
<rect x="1032.4" y="1072.4" width="10.5" height="10.4" fill="#ffeec2"/>
<rect x="1042.3" y="1072.4" width="10.5" height="10.4" fill="#ffebbf"/>
<rect x="1052.2" y="1072.4" width="10.5" height="10.4" fill="#ffe8bc"/>
<rect x="1062.1" y="1072.4" width="10.5" height="10.4" fill="#ffe5b9"/>
<rect x="1072.0" y="1072.4" width="10.5" height="10.4" fill="#ffe4b8"/>
<rect x="706.1" y="1082.2" width="10.5" height="10.4" fill="#88ffcd"/>
<rect x="716.0" y="1082.2" width="10.5" height="10.4" fill="#8affcd"/>
<rect x="725.9" y="1082.2" width="10.5" height="10.4" fill="#8effcc"/>
<rect x="735.8" y="1082.2" width="10.5" height="10.4" fill="#91ffcc"/>
<rect x="745.7" y="1082.2" width="10.5" height="10.4" fill="#95ffcb"/>
<rect x="755.6" y="1082.2" width="10.5" height="10.4" fill="#98ffcb"/>
<rect x="765.4" y="1082.2" width="10.5" height="10.4" fill="#9cffca"/>
<rect x="775.3" y="1082.2" width="10.5" height="10.4" fill="#9fffca"/>
<rect x="785.2" y="1082.2" width="10.5" height="10.4" fill="#a3ffca"/>
<rect x="795.1" y="1082.2" width="10.5" height="10.4" fill="#a6ffc9"/>
<rect x="805.0" y="1082.2" width="10.5" height="10.4" fill="#abffc9"/>
<rect x="814.9" y="1082.2" width="10.5" height="10.4" fill="#b0ffca"/>
<rect x="824.8" y="1082.2" width="10.5" height="10.4" fill="#b6ffcb"/>
<rect x="834.7" y="1082.2" width="10.5" height="10.4" fill="#bbffcc"/>
<rect x="844.6" y="1082.2" width="10.5" height="10.4" fill="#c0ffcd"/>
<rect x="854.4" y="1082.2" width="10.5" height="10.4" fill="#c6ffce"/>
<rect x="864.3" y="1082.2" width="10.5" height="10.4" fill="#cbffcf"/>
<rect x="874.2" y="1082.2" width="10.5" height="10.4" fill="#d0ffd0"/>
<rect x="884.1" y="1082.2" width="10.5" height="10.4" fill="#d6ffd1"/>
<rect x="894.0" y="1082.2" width="10.5" height="10.4" fill="#dbffd2"/>
<rect x="903.9" y="1082.2" width="10.5" height="10.4" fill="#e0ffd3"/>
<rect x="913.8" y="1082.2" width="10.5" height="10.4" fill="#e5ffd4"/>
<rect x="923.7" y="1082.2" width="10.5" height="10.4" fill="#eaffd5"/>
<rect x="933.6" y="1082.2" width="10.5" height="10.4" fill="#efffd6"/>
<rect x="943.4" y="1082.2" width="10.5" height="10.4" fill="#f4fed7"/>
<rect x="953.3" y="1082.2" width="10.5" height="10.4" fill="#f9fed8"/>
<rect x="963.2" y="1082.2" width="10.5" height="10.4" fill="#fcfdd7"/>
<rect x="973.1" y="1082.2" width="10.5" height="10.4" fill="#fcfbd4"/>
<rect x="983.0" y="1082.2" width="10.5" height="10.4" fill="#fdf9d1"/>
<rect x="992.9" y="1082.2" width="10.5" height="10.4" fill="#fdf7ce"/>
<rect x="1002.8" y="1082.2" width="10.5" height="10.4" fill="#fef5cb"/>
<rect x="1012.7" y="1082.2" width="10.5" height="10.4" fill="#fef3c8"/>
<rect x="1022.6" y="1082.2" width="10.5" height="10.4" fill="#fff0c6"/>
<rect x="1032.4" y="1082.2" width="10.5" height="10.4" fill="#ffedc3"/>
<rect x="1042.3" y="1082.2" width="10.5" height="10.4" fill="#ffeac0"/>
<rect x="1052.2" y="1082.2" width="10.5" height="10.4" fill="#ffe7bd"/>
<rect x="1062.1" y="1082.2" width="10.5" height="10.4" fill="#ffe4ba"/>
<rect x="1072.0" y="1082.2" width="10.5" height="10.4" fill="#ffe3b8"/>
<rect x="706.1" y="1092.0" width="10.5" height="10.4" fill="#8affd0"/>
<rect x="716.0" y="1092.0" width="10.5" height="10.4" fill="#8bffcf"/>
<rect x="725.9" y="1092.0" width="10.5" height="10.4" fill="#8fffcf"/>
<rect x="735.8" y="1092.0" width="10.5" height="10.4" fill="#92ffce"/>
<rect x="745.7" y="1092.0" width="10.5" height="10.4" fill="#96ffce"/>
<rect x="755.6" y="1092.0" width="10.5" height="10.4" fill="#9affce"/>
<rect x="765.4" y="1092.0" width="10.5" height="10.4" fill="#9dffcd"/>
<rect x="775.3" y="1092.0" width="10.5" height="10.4" fill="#a1ffcd"/>
<rect x="785.2" y="1092.0" width="10.5" height="10.4" fill="#a4ffcc"/>
<rect x="795.1" y="1092.0" width="10.5" height="10.4" fill="#a8ffcc"/>
<rect x="805.0" y="1092.0" width="10.5" height="10.4" fill="#acffcc"/>
<rect x="814.9" y="1092.0" width="10.5" height="10.4" fill="#b2ffcd"/>
<rect x="824.8" y="1092.0" width="10.5" height="10.4" fill="#b7ffce"/>
<rect x="834.7" y="1092.0" width="10.5" height="10.4" fill="#bdffcf"/>
<rect x="844.6" y="1092.0" width="10.5" height="10.4" fill="#c2ffd1"/>
<rect x="854.4" y="1092.0" width="10.5" height="10.4" fill="#c7ffd2"/>
<rect x="864.3" y="1092.0" width="10.5" height="10.4" fill="#cdffd3"/>
<rect x="874.2" y="1092.0" width="10.5" height="10.4" fill="#d2ffd4"/>
<rect x="884.1" y="1092.0" width="10.5" height="10.4" fill="#d8ffd5"/>
<rect x="894.0" y="1092.0" width="10.5" height="10.4" fill="#ddffd6"/>
<rect x="903.9" y="1092.0" width="10.5" height="10.4" fill="#e2ffd7"/>
<rect x="913.8" y="1092.0" width="10.5" height="10.4" fill="#e7ffd8"/>
<rect x="923.7" y="1092.0" width="10.5" height="10.4" fill="#ecffd8"/>
<rect x="933.6" y="1092.0" width="10.5" height="10.4" fill="#f1ffd9"/>
<rect x="943.4" y="1092.0" width="10.5" height="10.4" fill="#f6feda"/>
<rect x="953.3" y="1092.0" width="10.5" height="10.4" fill="#fafeda"/>
<rect x="963.2" y="1092.0" width="10.5" height="10.4" fill="#fcfcd9"/>
<rect x="973.1" y="1092.0" width="10.5" height="10.4" fill="#fdfad6"/>
<rect x="983.0" y="1092.0" width="10.5" height="10.4" fill="#fdf8d3"/>
<rect x="992.9" y="1092.0" width="10.5" height="10.4" fill="#fef5d0"/>
<rect x="1002.8" y="1092.0" width="10.5" height="10.4" fill="#fef3cd"/>
<rect x="1012.7" y="1092.0" width="10.5" height="10.4" fill="#fef1ca"/>
<rect x="1022.6" y="1092.0" width="10.5" height="10.4" fill="#ffeec7"/>
<rect x="1032.4" y="1092.0" width="10.5" height="10.4" fill="#ffebc4"/>
<rect x="1042.3" y="1092.0" width="10.5" height="10.4" fill="#ffe8c1"/>
<rect x="1052.2" y="1092.0" width="10.5" height="10.4" fill="#ffe5be"/>
<rect x="1062.1" y="1092.0" width="10.5" height="10.4" fill="#ffe2bb"/>
<rect x="1072.0" y="1092.0" width="10.5" height="10.4" fill="#ffe1ba"/>
<rect x="706.1" y="1101.8" width="10.5" height="10.4" fill="#8bffd2"/>
<rect x="716.0" y="1101.8" width="10.5" height="10.4" fill="#8dffd2"/>
<rect x="725.9" y="1101.8" width="10.5" height="10.4" fill="#90ffd2"/>
<rect x="735.8" y="1101.8" width="10.5" height="10.4" fill="#94ffd1"/>
<rect x="745.7" y="1101.8" width="10.5" height="10.4" fill="#97ffd1"/>
<rect x="755.6" y="1101.8" width="10.5" height="10.4" fill="#9bffd0"/>
<rect x="765.4" y="1101.8" width="10.5" height="10.4" fill="#9effd0"/>
<rect x="775.3" y="1101.8" width="10.5" height="10.4" fill="#a2ffcf"/>
<rect x="785.2" y="1101.8" width="10.5" height="10.4" fill="#a6ffcf"/>
<rect x="795.1" y="1101.8" width="10.5" height="10.4" fill="#a9ffce"/>
<rect x="805.0" y="1101.8" width="10.5" height="10.4" fill="#aeffcf"/>
<rect x="814.9" y="1101.8" width="10.5" height="10.4" fill="#b3ffd0"/>
<rect x="824.8" y="1101.8" width="10.5" height="10.4" fill="#b9ffd1"/>
<rect x="834.7" y="1101.8" width="10.5" height="10.4" fill="#beffd3"/>
<rect x="844.6" y="1101.8" width="10.5" height="10.4" fill="#c4ffd4"/>
<rect x="854.4" y="1101.8" width="10.5" height="10.4" fill="#c9ffd5"/>
<rect x="864.3" y="1101.8" width="10.5" height="10.4" fill="#cfffd6"/>
<rect x="874.2" y="1101.8" width="10.5" height="10.4" fill="#d4ffd8"/>
<rect x="884.1" y="1101.8" width="10.5" height="10.4" fill="#daffd9"/>
<rect x="894.0" y="1101.8" width="10.5" height="10.4" fill="#dfffda"/>
<rect x="903.9" y="1101.8" width="10.5" height="10.4" fill="#e4ffda"/>
<rect x="913.8" y="1101.8" width="10.5" height="10.4" fill="#e9ffdb"/>
<rect x="923.7" y="1101.8" width="10.5" height="10.4" fill="#eeffdc"/>
<rect x="933.6" y="1101.8" width="10.5" height="10.4" fill="#f3ffdc"/>
<rect x="943.4" y="1101.8" width="10.5" height="10.4" fill="#f8fedd"/>
<rect x="953.3" y="1101.8" width="10.5" height="10.4" fill="#fbfddc"/>
<rect x="963.2" y="1101.8" width="10.5" height="10.4" fill="#fdfbdb"/>
<rect x="973.1" y="1101.8" width="10.5" height="10.4" fill="#fdf9d8"/>
<rect x="983.0" y="1101.8" width="10.5" height="10.4" fill="#fdf6d4"/>
<rect x="992.9" y="1101.8" width="10.5" height="10.4" fill="#fef4d1"/>
<rect x="1002.8" y="1101.8" width="10.5" height="10.4" fill="#fef1ce"/>
<rect x="1012.7" y="1101.8" width="10.5" height="10.4" fill="#feefcb"/>
<rect x="1022.6" y="1101.8" width="10.5" height="10.4" fill="#ffecc8"/>
<rect x="1032.4" y="1101.8" width="10.5" height="10.4" fill="#ffe9c5"/>
<rect x="1042.3" y="1101.8" width="10.5" height="10.4" fill="#ffe6c2"/>
<rect x="1052.2" y="1101.8" width="10.5" height="10.4" fill="#ffe3bf"/>
<rect x="1062.1" y="1101.8" width="10.5" height="10.4" fill="#ffe0bc"/>
<rect x="1072.0" y="1101.8" width="10.5" height="10.4" fill="#ffdfbb"/>
<rect x="706.1" y="1111.5" width="10.5" height="10.4" fill="#8cffd5"/>
<rect x="716.0" y="1111.5" width="10.5" height="10.4" fill="#8effd5"/>
<rect x="725.9" y="1111.5" width="10.5" height="10.4" fill="#92ffd4"/>
<rect x="735.8" y="1111.5" width="10.5" height="10.4" fill="#95ffd4"/>
<rect x="745.7" y="1111.5" width="10.5" height="10.4" fill="#99ffd3"/>
<rect x="755.6" y="1111.5" width="10.5" height="10.4" fill="#9cffd3"/>
<rect x="765.4" y="1111.5" width="10.5" height="10.4" fill="#a0ffd2"/>
<rect x="775.3" y="1111.5" width="10.5" height="10.4" fill="#a3ffd2"/>
<rect x="785.2" y="1111.5" width="10.5" height="10.4" fill="#a7ffd2"/>
<rect x="795.1" y="1111.5" width="10.5" height="10.4" fill="#aaffd1"/>
<rect x="805.0" y="1111.5" width="10.5" height="10.4" fill="#afffd2"/>
<rect x="814.9" y="1111.5" width="10.5" height="10.4" fill="#b5ffd3"/>
<rect x="824.8" y="1111.5" width="10.5" height="10.4" fill="#baffd4"/>
<rect x="834.7" y="1111.5" width="10.5" height="10.4" fill="#c0ffd6"/>
<rect x="844.6" y="1111.5" width="10.5" height="10.4" fill="#c5ffd7"/>
<rect x="854.4" y="1111.5" width="10.5" height="10.4" fill="#cbffd9"/>
<rect x="864.3" y="1111.5" width="10.5" height="10.4" fill="#d1ffda"/>
<rect x="874.2" y="1111.5" width="10.5" height="10.4" fill="#d6ffdb"/>
<rect x="884.1" y="1111.5" width="10.5" height="10.4" fill="#dcffdd"/>
<rect x="894.0" y="1111.5" width="10.5" height="10.4" fill="#e1ffde"/>
<rect x="903.9" y="1111.5" width="10.5" height="10.4" fill="#e6ffde"/>
<rect x="913.8" y="1111.5" width="10.5" height="10.4" fill="#ebffdf"/>
<rect x="923.7" y="1111.5" width="10.5" height="10.4" fill="#f0ffdf"/>
<rect x="933.6" y="1111.5" width="10.5" height="10.4" fill="#f5ffe0"/>
<rect x="943.4" y="1111.5" width="10.5" height="10.4" fill="#fafee0"/>
<rect x="953.3" y="1111.5" width="10.5" height="10.4" fill="#fcfcde"/>
<rect x="963.2" y="1111.5" width="10.5" height="10.4" fill="#fdfadc"/>
<rect x="973.1" y="1111.5" width="10.5" height="10.4" fill="#fef8d9"/>
<rect x="983.0" y="1111.5" width="10.5" height="10.4" fill="#fef5d6"/>
<rect x="992.9" y="1111.5" width="10.5" height="10.4" fill="#fef2d3"/>
<rect x="1002.8" y="1111.5" width="10.5" height="10.4" fill="#feefd0"/>
<rect x="1012.7" y="1111.5" width="10.5" height="10.4" fill="#feedcc"/>
<rect x="1022.6" y="1111.5" width="10.5" height="10.4" fill="#ffeaca"/>
<rect x="1032.4" y="1111.5" width="10.5" height="10.4" fill="#ffe7c7"/>
<rect x="1042.3" y="1111.5" width="10.5" height="10.4" fill="#ffe4c4"/>
<rect x="1052.2" y="1111.5" width="10.5" height="10.4" fill="#ffe1c1"/>
<rect x="1062.1" y="1111.5" width="10.5" height="10.4" fill="#ffdebe"/>
<rect x="1072.0" y="1111.5" width="10.5" height="10.4" fill="#ffddbc"/>
<rect x="706.1" y="1121.3" width="10.5" height="10.4" fill="#8effd8"/>
<rect x="716.0" y="1121.3" width="10.5" height="10.4" fill="#8fffd7"/>
<rect x="725.9" y="1121.3" width="10.5" height="10.4" fill="#93ffd7"/>
<rect x="735.8" y="1121.3" width="10.5" height="10.4" fill="#96ffd6"/>
<rect x="745.7" y="1121.3" width="10.5" height="10.4" fill="#9affd6"/>
<rect x="755.6" y="1121.3" width="10.5" height="10.4" fill="#9effd6"/>
<rect x="765.4" y="1121.3" width="10.5" height="10.4" fill="#a1ffd5"/>
<rect x="775.3" y="1121.3" width="10.5" height="10.4" fill="#a5ffd5"/>
<rect x="785.2" y="1121.3" width="10.5" height="10.4" fill="#a8ffd4"/>
<rect x="795.1" y="1121.3" width="10.5" height="10.4" fill="#acffd4"/>
<rect x="805.0" y="1121.3" width="10.5" height="10.4" fill="#b0ffd4"/>
<rect x="814.9" y="1121.3" width="10.5" height="10.4" fill="#b6ffd6"/>
<rect x="824.8" y="1121.3" width="10.5" height="10.4" fill="#bcffd7"/>
<rect x="834.7" y="1121.3" width="10.5" height="10.4" fill="#c1ffd9"/>
<rect x="844.6" y="1121.3" width="10.5" height="10.4" fill="#c7ffdb"/>
<rect x="854.4" y="1121.3" width="10.5" height="10.4" fill="#cdffdc"/>
<rect x="864.3" y="1121.3" width="10.5" height="10.4" fill="#d2ffde"/>
<rect x="874.2" y="1121.3" width="10.5" height="10.4" fill="#d8ffdf"/>
<rect x="884.1" y="1121.3" width="10.5" height="10.4" fill="#deffe1"/>
<rect x="894.0" y="1121.3" width="10.5" height="10.4" fill="#e3ffe2"/>
<rect x="903.9" y="1121.3" width="10.5" height="10.4" fill="#e8ffe2"/>
<rect x="913.8" y="1121.3" width="10.5" height="10.4" fill="#edffe2"/>
<rect x="923.7" y="1121.3" width="10.5" height="10.4" fill="#f2ffe2"/>
<rect x="933.6" y="1121.3" width="10.5" height="10.4" fill="#f7ffe3"/>
<rect x="943.4" y="1121.3" width="10.5" height="10.4" fill="#fcfee3"/>
<rect x="953.3" y="1121.3" width="10.5" height="10.4" fill="#fdfce1"/>
<rect x="963.2" y="1121.3" width="10.5" height="10.4" fill="#fef9de"/>
<rect x="973.1" y="1121.3" width="10.5" height="10.4" fill="#fef6db"/>
<rect x="983.0" y="1121.3" width="10.5" height="10.4" fill="#fef4d8"/>
<rect x="992.9" y="1121.3" width="10.5" height="10.4" fill="#fef1d4"/>
<rect x="1002.8" y="1121.3" width="10.5" height="10.4" fill="#feeed1"/>
<rect x="1012.7" y="1121.3" width="10.5" height="10.4" fill="#feebce"/>
<rect x="1022.6" y="1121.3" width="10.5" height="10.4" fill="#ffe8cb"/>
<rect x="1032.4" y="1121.3" width="10.5" height="10.4" fill="#ffe5c8"/>
<rect x="1042.3" y="1121.3" width="10.5" height="10.4" fill="#ffe2c5"/>
<rect x="1052.2" y="1121.3" width="10.5" height="10.4" fill="#ffdfc2"/>
<rect x="1062.1" y="1121.3" width="10.5" height="10.4" fill="#ffdcbf"/>
<rect x="1072.0" y="1121.3" width="10.5" height="10.4" fill="#ffdbbe"/>
<rect x="706.1" y="1131.1" width="10.5" height="10.4" fill="#8fffda"/>
<rect x="716.0" y="1131.1" width="10.5" height="10.4" fill="#91ffda"/>
<rect x="725.9" y="1131.1" width="10.5" height="10.4" fill="#94ffda"/>
<rect x="735.8" y="1131.1" width="10.5" height="10.4" fill="#98ffd9"/>
<rect x="745.7" y="1131.1" width="10.5" height="10.4" fill="#9bffd9"/>
<rect x="755.6" y="1131.1" width="10.5" height="10.4" fill="#9fffd8"/>
<rect x="765.4" y="1131.1" width="10.5" height="10.4" fill="#a2ffd8"/>
<rect x="775.3" y="1131.1" width="10.5" height="10.4" fill="#a6ffd7"/>
<rect x="785.2" y="1131.1" width="10.5" height="10.4" fill="#aaffd7"/>
<rect x="795.1" y="1131.1" width="10.5" height="10.4" fill="#adffd6"/>
<rect x="805.0" y="1131.1" width="10.5" height="10.4" fill="#b2ffd7"/>
<rect x="814.9" y="1131.1" width="10.5" height="10.4" fill="#b7ffd9"/>
<rect x="824.8" y="1131.1" width="10.5" height="10.4" fill="#bdffda"/>
<rect x="834.7" y="1131.1" width="10.5" height="10.4" fill="#c3ffdc"/>
<rect x="844.6" y="1131.1" width="10.5" height="10.4" fill="#c9ffde"/>
<rect x="854.4" y="1131.1" width="10.5" height="10.4" fill="#ceffe0"/>
<rect x="864.3" y="1131.1" width="10.5" height="10.4" fill="#d4ffe1"/>
<rect x="874.2" y="1131.1" width="10.5" height="10.4" fill="#daffe3"/>
<rect x="884.1" y="1131.1" width="10.5" height="10.4" fill="#e0ffe5"/>
<rect x="894.0" y="1131.1" width="10.5" height="10.4" fill="#e5ffe6"/>
<rect x="903.9" y="1131.1" width="10.5" height="10.4" fill="#eaffe6"/>
<rect x="913.8" y="1131.1" width="10.5" height="10.4" fill="#efffe6"/>
<rect x="923.7" y="1131.1" width="10.5" height="10.4" fill="#f4ffe6"/>
<rect x="933.6" y="1131.1" width="10.5" height="10.4" fill="#f9ffe6"/>
<rect x="943.4" y="1131.1" width="10.5" height="10.4" fill="#fefee6"/>
<rect x="953.3" y="1131.1" width="10.5" height="10.4" fill="#fefbe3"/>
<rect x="963.2" y="1131.1" width="10.5" height="10.4" fill="#fef8e0"/>
<rect x="973.1" y="1131.1" width="10.5" height="10.4" fill="#fef5dc"/>
<rect x="983.0" y="1131.1" width="10.5" height="10.4" fill="#fef2d9"/>
<rect x="992.9" y="1131.1" width="10.5" height="10.4" fill="#feefd6"/>
<rect x="1002.8" y="1131.1" width="10.5" height="10.4" fill="#feecd2"/>
<rect x="1012.7" y="1131.1" width="10.5" height="10.4" fill="#fee9cf"/>
<rect x="1022.6" y="1131.1" width="10.5" height="10.4" fill="#ffe6cc"/>
<rect x="1032.4" y="1131.1" width="10.5" height="10.4" fill="#ffe3c9"/>
<rect x="1042.3" y="1131.1" width="10.5" height="10.4" fill="#ffe0c6"/>
<rect x="1052.2" y="1131.1" width="10.5" height="10.4" fill="#ffddc3"/>
<rect x="1062.1" y="1131.1" width="10.5" height="10.4" fill="#ffdac0"/>
<rect x="1072.0" y="1131.1" width="10.5" height="10.4" fill="#ffd9bf"/>
<rect x="706.1" y="1140.8" width="10.5" height="10.4" fill="#91ffde"/>
<rect x="716.0" y="1140.8" width="10.5" height="10.4" fill="#93ffde"/>
<rect x="725.9" y="1140.8" width="10.5" height="10.4" fill="#96ffde"/>
<rect x="735.8" y="1140.8" width="10.5" height="10.4" fill="#9affdd"/>
<rect x="745.7" y="1140.8" width="10.5" height="10.4" fill="#9effdd"/>
<rect x="755.6" y="1140.8" width="10.5" height="10.4" fill="#a1ffdd"/>
<rect x="765.4" y="1140.8" width="10.5" height="10.4" fill="#a5ffdc"/>
<rect x="775.3" y="1140.8" width="10.5" height="10.4" fill="#a8ffdc"/>
<rect x="785.2" y="1140.8" width="10.5" height="10.4" fill="#acffdb"/>
<rect x="795.1" y="1140.8" width="10.5" height="10.4" fill="#b0ffdb"/>
<rect x="805.0" y="1140.8" width="10.5" height="10.4" fill="#b4ffdc"/>
<rect x="814.9" y="1140.8" width="10.5" height="10.4" fill="#baffdd"/>
<rect x="824.8" y="1140.8" width="10.5" height="10.4" fill="#c0ffdf"/>
<rect x="834.7" y="1140.8" width="10.5" height="10.4" fill="#c6ffe0"/>
<rect x="844.6" y="1140.8" width="10.5" height="10.4" fill="#ccffe2"/>
<rect x="854.4" y="1140.8" width="10.5" height="10.4" fill="#d2ffe4"/>
<rect x="864.3" y="1140.8" width="10.5" height="10.4" fill="#d8ffe5"/>
<rect x="874.2" y="1140.8" width="10.5" height="10.4" fill="#ddfee7"/>
<rect x="884.1" y="1140.8" width="10.5" height="10.4" fill="#e3fee8"/>
<rect x="894.0" y="1140.8" width="10.5" height="10.4" fill="#e8fee9"/>
<rect x="903.9" y="1140.8" width="10.5" height="10.4" fill="#edfee9"/>
<rect x="913.8" y="1140.8" width="10.5" height="10.4" fill="#f1fee8"/>
<rect x="923.7" y="1140.8" width="10.5" height="10.4" fill="#f6fee8"/>
<rect x="933.6" y="1140.8" width="10.5" height="10.4" fill="#fafde8"/>
<rect x="943.4" y="1140.8" width="10.5" height="10.4" fill="#fffde7"/>
<rect x="953.3" y="1140.8" width="10.5" height="10.4" fill="#fff9e4"/>
<rect x="963.2" y="1140.8" width="10.5" height="10.4" fill="#fff6e1"/>
<rect x="973.1" y="1140.8" width="10.5" height="10.4" fill="#fff3dd"/>
<rect x="983.0" y="1140.8" width="10.5" height="10.4" fill="#fff0da"/>
<rect x="992.9" y="1140.8" width="10.5" height="10.4" fill="#ffedd7"/>
<rect x="1002.8" y="1140.8" width="10.5" height="10.4" fill="#ffe9d3"/>
<rect x="1012.7" y="1140.8" width="10.5" height="10.4" fill="#ffe6d0"/>
<rect x="1022.6" y="1140.8" width="10.5" height="10.4" fill="#ffe3cd"/>
<rect x="1032.4" y="1140.8" width="10.5" height="10.4" fill="#ffe0ca"/>
<rect x="1042.3" y="1140.8" width="10.5" height="10.4" fill="#ffddc7"/>
<rect x="1052.2" y="1140.8" width="10.5" height="10.4" fill="#ffdac4"/>
<rect x="1062.1" y="1140.8" width="10.5" height="10.4" fill="#ffd7c1"/>
<rect x="1072.0" y="1140.8" width="10.5" height="10.4" fill="#ffd6c0"/>
<rect x="706.1" y="1150.6" width="10.5" height="10.4" fill="#94ffe4"/>
<rect x="716.0" y="1150.6" width="10.5" height="10.4" fill="#95ffe4"/>
<rect x="725.9" y="1150.6" width="10.5" height="10.4" fill="#99ffe4"/>
<rect x="735.8" y="1150.6" width="10.5" height="10.4" fill="#9dffe3"/>
<rect x="745.7" y="1150.6" width="10.5" height="10.4" fill="#a1ffe3"/>
<rect x="755.6" y="1150.6" width="10.5" height="10.4" fill="#a5ffe3"/>
<rect x="765.4" y="1150.6" width="10.5" height="10.4" fill="#a8ffe2"/>
<rect x="775.3" y="1150.6" width="10.5" height="10.4" fill="#acffe2"/>
<rect x="785.2" y="1150.6" width="10.5" height="10.4" fill="#b0ffe2"/>
<rect x="795.1" y="1150.6" width="10.5" height="10.4" fill="#b4ffe1"/>
<rect x="805.0" y="1150.6" width="10.5" height="10.4" fill="#b9ffe2"/>
<rect x="814.9" y="1150.6" width="10.5" height="10.4" fill="#bfffe3"/>
<rect x="824.8" y="1150.6" width="10.5" height="10.4" fill="#c5ffe4"/>
<rect x="834.7" y="1150.6" width="10.5" height="10.4" fill="#cbffe6"/>
<rect x="844.6" y="1150.6" width="10.5" height="10.4" fill="#d1ffe7"/>
<rect x="854.4" y="1150.6" width="10.5" height="10.4" fill="#d7ffe8"/>
<rect x="864.3" y="1150.6" width="10.5" height="10.4" fill="#ddffe9"/>
<rect x="874.2" y="1150.6" width="10.5" height="10.4" fill="#e2feea"/>
<rect x="884.1" y="1150.6" width="10.5" height="10.4" fill="#e7feeb"/>
<rect x="894.0" y="1150.6" width="10.5" height="10.4" fill="#ebfeeb"/>
<rect x="903.9" y="1150.6" width="10.5" height="10.4" fill="#f0fdeb"/>
<rect x="913.8" y="1150.6" width="10.5" height="10.4" fill="#f4fdea"/>
<rect x="923.7" y="1150.6" width="10.5" height="10.4" fill="#f7fce9"/>
<rect x="933.6" y="1150.6" width="10.5" height="10.4" fill="#fbfbe9"/>
<rect x="943.4" y="1150.6" width="10.5" height="10.4" fill="#fffae8"/>
<rect x="953.3" y="1150.6" width="10.5" height="10.4" fill="#fff6e4"/>
<rect x="963.2" y="1150.6" width="10.5" height="10.4" fill="#fff3e1"/>
<rect x="973.1" y="1150.6" width="10.5" height="10.4" fill="#fff0de"/>
<rect x="983.0" y="1150.6" width="10.5" height="10.4" fill="#ffecdb"/>
<rect x="992.9" y="1150.6" width="10.5" height="10.4" fill="#ffe9d7"/>
<rect x="1002.8" y="1150.6" width="10.5" height="10.4" fill="#ffe6d4"/>
<rect x="1012.7" y="1150.6" width="10.5" height="10.4" fill="#ffe3d1"/>
<rect x="1022.6" y="1150.6" width="10.5" height="10.4" fill="#ffe0ce"/>
<rect x="1032.4" y="1150.6" width="10.5" height="10.4" fill="#ffdcca"/>
<rect x="1042.3" y="1150.6" width="10.5" height="10.4" fill="#ffd9c7"/>
<rect x="1052.2" y="1150.6" width="10.5" height="10.4" fill="#ffd6c4"/>
<rect x="1062.1" y="1150.6" width="10.5" height="10.4" fill="#ffd3c1"/>
<rect x="1072.0" y="1150.6" width="10.5" height="10.4" fill="#ffd2c0"/>
<rect x="706.1" y="1160.4" width="10.5" height="10.4" fill="#96ffea"/>
<rect x="716.0" y="1160.4" width="10.5" height="10.4" fill="#98ffea"/>
<rect x="725.9" y="1160.4" width="10.5" height="10.4" fill="#9cffea"/>
<rect x="735.8" y="1160.4" width="10.5" height="10.4" fill="#a0ffe9"/>
<rect x="745.7" y="1160.4" width="10.5" height="10.4" fill="#a4ffe9"/>
<rect x="755.6" y="1160.4" width="10.5" height="10.4" fill="#a8ffe9"/>
<rect x="765.4" y="1160.4" width="10.5" height="10.4" fill="#acffe9"/>
<rect x="775.3" y="1160.4" width="10.5" height="10.4" fill="#b0ffe8"/>
<rect x="785.2" y="1160.4" width="10.5" height="10.4" fill="#b4ffe8"/>
<rect x="795.1" y="1160.4" width="10.5" height="10.4" fill="#b8ffe8"/>
<rect x="805.0" y="1160.4" width="10.5" height="10.4" fill="#bdffe8"/>
<rect x="814.9" y="1160.4" width="10.5" height="10.4" fill="#c3ffe9"/>
<rect x="824.8" y="1160.4" width="10.5" height="10.4" fill="#c9ffea"/>
<rect x="834.7" y="1160.4" width="10.5" height="10.4" fill="#cfffeb"/>
<rect x="844.6" y="1160.4" width="10.5" height="10.4" fill="#d5ffec"/>
<rect x="854.4" y="1160.4" width="10.5" height="10.4" fill="#dbffec"/>
<rect x="864.3" y="1160.4" width="10.5" height="10.4" fill="#e1ffed"/>
<rect x="874.2" y="1160.4" width="10.5" height="10.4" fill="#e7feee"/>
<rect x="884.1" y="1160.4" width="10.5" height="10.4" fill="#ebfeee"/>
<rect x="894.0" y="1160.4" width="10.5" height="10.4" fill="#effdee"/>
<rect x="903.9" y="1160.4" width="10.5" height="10.4" fill="#f3fded"/>
<rect x="913.8" y="1160.4" width="10.5" height="10.4" fill="#f6fbec"/>
<rect x="923.7" y="1160.4" width="10.5" height="10.4" fill="#f9faeb"/>
<rect x="933.6" y="1160.4" width="10.5" height="10.4" fill="#fcf8e9"/>
<rect x="943.4" y="1160.4" width="10.5" height="10.4" fill="#fff7e8"/>
<rect x="953.3" y="1160.4" width="10.5" height="10.4" fill="#fff3e5"/>
<rect x="963.2" y="1160.4" width="10.5" height="10.4" fill="#fff0e2"/>
<rect x="973.1" y="1160.4" width="10.5" height="10.4" fill="#ffeddf"/>
<rect x="983.0" y="1160.4" width="10.5" height="10.4" fill="#ffe9db"/>
<rect x="992.9" y="1160.4" width="10.5" height="10.4" fill="#ffe6d8"/>
<rect x="1002.8" y="1160.4" width="10.5" height="10.4" fill="#ffe3d5"/>
<rect x="1012.7" y="1160.4" width="10.5" height="10.4" fill="#ffdfd1"/>
<rect x="1022.6" y="1160.4" width="10.5" height="10.4" fill="#ffdcce"/>
<rect x="1032.4" y="1160.4" width="10.5" height="10.4" fill="#ffd9cb"/>
<rect x="1042.3" y="1160.4" width="10.5" height="10.4" fill="#ffd6c8"/>
<rect x="1052.2" y="1160.4" width="10.5" height="10.4" fill="#ffd2c4"/>
<rect x="1062.1" y="1160.4" width="10.5" height="10.4" fill="#ffcfc1"/>
<rect x="1072.0" y="1160.4" width="10.5" height="10.4" fill="#ffcec0"/>
<rect x="706.1" y="1170.2" width="10.5" height="10.4" fill="#99fff0"/>
<rect x="716.0" y="1170.2" width="10.5" height="10.4" fill="#9bfff0"/>
<rect x="725.9" y="1170.2" width="10.5" height="10.4" fill="#9ffff0"/>
<rect x="735.8" y="1170.2" width="10.5" height="10.4" fill="#a3ffef"/>
<rect x="745.7" y="1170.2" width="10.5" height="10.4" fill="#a7ffef"/>
<rect x="755.6" y="1170.2" width="10.5" height="10.4" fill="#abffef"/>
<rect x="765.4" y="1170.2" width="10.5" height="10.4" fill="#afffef"/>
<rect x="775.3" y="1170.2" width="10.5" height="10.4" fill="#b3ffef"/>
<rect x="785.2" y="1170.2" width="10.5" height="10.4" fill="#b7ffef"/>
<rect x="795.1" y="1170.2" width="10.5" height="10.4" fill="#bbffee"/>
<rect x="805.0" y="1170.2" width="10.5" height="10.4" fill="#c1ffee"/>
<rect x="814.9" y="1170.2" width="10.5" height="10.4" fill="#c7ffef"/>
<rect x="824.8" y="1170.2" width="10.5" height="10.4" fill="#cdffef"/>
<rect x="834.7" y="1170.2" width="10.5" height="10.4" fill="#d4fff0"/>
<rect x="844.6" y="1170.2" width="10.5" height="10.4" fill="#dafff0"/>
<rect x="854.4" y="1170.2" width="10.5" height="10.4" fill="#e0fff1"/>
<rect x="864.3" y="1170.2" width="10.5" height="10.4" fill="#e6fff1"/>
<rect x="874.2" y="1170.2" width="10.5" height="10.4" fill="#ecfef2"/>
<rect x="884.1" y="1170.2" width="10.5" height="10.4" fill="#effdf1"/>
<rect x="894.0" y="1170.2" width="10.5" height="10.4" fill="#f3fdf0"/>
<rect x="903.9" y="1170.2" width="10.5" height="10.4" fill="#f6fcef"/>
<rect x="913.8" y="1170.2" width="10.5" height="10.4" fill="#f8faed"/>
<rect x="923.7" y="1170.2" width="10.5" height="10.4" fill="#fbf8ec"/>
<rect x="933.6" y="1170.2" width="10.5" height="10.4" fill="#fdf6ea"/>
<rect x="943.4" y="1170.2" width="10.5" height="10.4" fill="#fff4e8"/>
<rect x="953.3" y="1170.2" width="10.5" height="10.4" fill="#fff0e5"/>
<rect x="963.2" y="1170.2" width="10.5" height="10.4" fill="#ffede2"/>
<rect x="973.1" y="1170.2" width="10.5" height="10.4" fill="#ffe9df"/>
<rect x="983.0" y="1170.2" width="10.5" height="10.4" fill="#ffe6dc"/>
<rect x="992.9" y="1170.2" width="10.5" height="10.4" fill="#ffe3d9"/>
<rect x="1002.8" y="1170.2" width="10.5" height="10.4" fill="#ffdfd5"/>
<rect x="1012.7" y="1170.2" width="10.5" height="10.4" fill="#ffdcd2"/>
<rect x="1022.6" y="1170.2" width="10.5" height="10.4" fill="#ffd8ce"/>
<rect x="1032.4" y="1170.2" width="10.5" height="10.4" fill="#ffd5cb"/>
<rect x="1042.3" y="1170.2" width="10.5" height="10.4" fill="#ffd2c8"/>
<rect x="1052.2" y="1170.2" width="10.5" height="10.4" fill="#ffcec4"/>
<rect x="1062.1" y="1170.2" width="10.5" height="10.4" fill="#ffcbc1"/>
<rect x="1072.0" y="1170.2" width="10.5" height="10.4" fill="#ffcac0"/>
<rect x="706.1" y="1180.0" width="10.5" height="10.4" fill="#9cfff6"/>
<rect x="716.0" y="1180.0" width="10.5" height="10.4" fill="#9efff6"/>
<rect x="725.9" y="1180.0" width="10.5" height="10.4" fill="#a2fff6"/>
<rect x="735.8" y="1180.0" width="10.5" height="10.4" fill="#a6fff5"/>
<rect x="745.7" y="1180.0" width="10.5" height="10.4" fill="#aafff5"/>
<rect x="755.6" y="1180.0" width="10.5" height="10.4" fill="#affff5"/>
<rect x="765.4" y="1180.0" width="10.5" height="10.4" fill="#b3fff5"/>
<rect x="775.3" y="1180.0" width="10.5" height="10.4" fill="#b7fff5"/>
<rect x="785.2" y="1180.0" width="10.5" height="10.4" fill="#bbfff5"/>
<rect x="795.1" y="1180.0" width="10.5" height="10.4" fill="#bffff5"/>
<rect x="805.0" y="1180.0" width="10.5" height="10.4" fill="#c5fff5"/>
<rect x="814.9" y="1180.0" width="10.5" height="10.4" fill="#cbfff5"/>
<rect x="824.8" y="1180.0" width="10.5" height="10.4" fill="#d2fff5"/>
<rect x="834.7" y="1180.0" width="10.5" height="10.4" fill="#d8fff5"/>
<rect x="844.6" y="1180.0" width="10.5" height="10.4" fill="#dffff5"/>
<rect x="854.4" y="1180.0" width="10.5" height="10.4" fill="#e5fff5"/>
<rect x="864.3" y="1180.0" width="10.5" height="10.4" fill="#ebfff6"/>
<rect x="874.2" y="1180.0" width="10.5" height="10.4" fill="#f1fef5"/>
<rect x="884.1" y="1180.0" width="10.5" height="10.4" fill="#f4fdf4"/>
<rect x="894.0" y="1180.0" width="10.5" height="10.4" fill="#f6fcf3"/>
<rect x="903.9" y="1180.0" width="10.5" height="10.4" fill="#f9fbf1"/>
<rect x="913.8" y="1180.0" width="10.5" height="10.4" fill="#fbf9ef"/>
<rect x="923.7" y="1180.0" width="10.5" height="10.4" fill="#fcf6ed"/>
<rect x="933.6" y="1180.0" width="10.5" height="10.4" fill="#fdf3eb"/>
<rect x="943.4" y="1180.0" width="10.5" height="10.4" fill="#fff1e9"/>
<rect x="953.3" y="1180.0" width="10.5" height="10.4" fill="#ffede6"/>
<rect x="963.2" y="1180.0" width="10.5" height="10.4" fill="#ffeae3"/>
<rect x="973.1" y="1180.0" width="10.5" height="10.4" fill="#ffe6e0"/>
<rect x="983.0" y="1180.0" width="10.5" height="10.4" fill="#ffe3dd"/>
<rect x="992.9" y="1180.0" width="10.5" height="10.4" fill="#ffdfd9"/>
<rect x="1002.8" y="1180.0" width="10.5" height="10.4" fill="#ffdcd6"/>
<rect x="1012.7" y="1180.0" width="10.5" height="10.4" fill="#ffd8d2"/>
<rect x="1022.6" y="1180.0" width="10.5" height="10.4" fill="#ffd5cf"/>
<rect x="1032.4" y="1180.0" width="10.5" height="10.4" fill="#ffd1cb"/>
<rect x="1042.3" y="1180.0" width="10.5" height="10.4" fill="#ffcec8"/>
<rect x="1052.2" y="1180.0" width="10.5" height="10.4" fill="#ffcbc5"/>
<rect x="1062.1" y="1180.0" width="10.5" height="10.4" fill="#ffc7c1"/>
<rect x="1072.0" y="1180.0" width="10.5" height="10.4" fill="#ffc6c0"/>
<rect x="706.1" y="1189.7" width="10.5" height="10.4" fill="#9efffc"/>
<rect x="716.0" y="1189.7" width="10.5" height="10.4" fill="#a0fffc"/>
<rect x="725.9" y="1189.7" width="10.5" height="10.4" fill="#a5fffc"/>
<rect x="735.8" y="1189.7" width="10.5" height="10.4" fill="#a9fffb"/>
<rect x="745.7" y="1189.7" width="10.5" height="10.4" fill="#adfffb"/>
<rect x="755.6" y="1189.7" width="10.5" height="10.4" fill="#b2fffb"/>
<rect x="765.4" y="1189.7" width="10.5" height="10.4" fill="#b6fffb"/>
<rect x="775.3" y="1189.7" width="10.5" height="10.4" fill="#bbfffb"/>
<rect x="785.2" y="1189.7" width="10.5" height="10.4" fill="#bffffb"/>
<rect x="795.1" y="1189.7" width="10.5" height="10.4" fill="#c3fffb"/>
<rect x="805.0" y="1189.7" width="10.5" height="10.4" fill="#c9fffb"/>
<rect x="814.9" y="1189.7" width="10.5" height="10.4" fill="#cffffb"/>
<rect x="824.8" y="1189.7" width="10.5" height="10.4" fill="#d6fffb"/>
<rect x="834.7" y="1189.7" width="10.5" height="10.4" fill="#ddfffa"/>
<rect x="844.6" y="1189.7" width="10.5" height="10.4" fill="#e3fffa"/>
<rect x="854.4" y="1189.7" width="10.5" height="10.4" fill="#eafffa"/>
<rect x="864.3" y="1189.7" width="10.5" height="10.4" fill="#f0fffa"/>
<rect x="874.2" y="1189.7" width="10.5" height="10.4" fill="#f6fef9"/>
<rect x="884.1" y="1189.7" width="10.5" height="10.4" fill="#f8fdf7"/>
<rect x="894.0" y="1189.7" width="10.5" height="10.4" fill="#fafcf5"/>
<rect x="903.9" y="1189.7" width="10.5" height="10.4" fill="#fcfaf3"/>
<rect x="913.8" y="1189.7" width="10.5" height="10.4" fill="#fdf8f1"/>
<rect x="923.7" y="1189.7" width="10.5" height="10.4" fill="#fef4ee"/>
<rect x="933.6" y="1189.7" width="10.5" height="10.4" fill="#fef1ec"/>
<rect x="943.4" y="1189.7" width="10.5" height="10.4" fill="#ffeee9"/>
<rect x="953.3" y="1189.7" width="10.5" height="10.4" fill="#ffeae6"/>
<rect x="963.2" y="1189.7" width="10.5" height="10.4" fill="#ffe6e3"/>
<rect x="973.1" y="1189.7" width="10.5" height="10.4" fill="#ffe3e1"/>
<rect x="983.0" y="1189.7" width="10.5" height="10.4" fill="#ffdfdd"/>
<rect x="992.9" y="1189.7" width="10.5" height="10.4" fill="#ffdcda"/>
<rect x="1002.8" y="1189.7" width="10.5" height="10.4" fill="#ffd8d6"/>
<rect x="1012.7" y="1189.7" width="10.5" height="10.4" fill="#ffd5d3"/>
<rect x="1022.6" y="1189.7" width="10.5" height="10.4" fill="#ffd1cf"/>
<rect x="1032.4" y="1189.7" width="10.5" height="10.4" fill="#ffcecc"/>
<rect x="1042.3" y="1189.7" width="10.5" height="10.4" fill="#ffcac8"/>
<rect x="1052.2" y="1189.7" width="10.5" height="10.4" fill="#ffc7c5"/>
<rect x="1062.1" y="1189.7" width="10.5" height="10.4" fill="#ffc3c1"/>
<rect x="1072.0" y="1189.7" width="10.5" height="10.4" fill="#ffc2c0"/>
<rect x="706.1" y="1199.5" width="10.5" height="10.4" fill="#a0fdff"/>
<rect x="716.0" y="1199.5" width="10.5" height="10.4" fill="#a2fdff"/>
<rect x="725.9" y="1199.5" width="10.5" height="10.4" fill="#a7fdff"/>
<rect x="735.8" y="1199.5" width="10.5" height="10.4" fill="#abfdff"/>
<rect x="745.7" y="1199.5" width="10.5" height="10.4" fill="#b0fdff"/>
<rect x="755.6" y="1199.5" width="10.5" height="10.4" fill="#b5fdff"/>
<rect x="765.4" y="1199.5" width="10.5" height="10.4" fill="#b9fdff"/>
<rect x="775.3" y="1199.5" width="10.5" height="10.4" fill="#befdff"/>
<rect x="785.2" y="1199.5" width="10.5" height="10.4" fill="#c2fdff"/>
<rect x="795.1" y="1199.5" width="10.5" height="10.4" fill="#c7fdff"/>
<rect x="805.0" y="1199.5" width="10.5" height="10.4" fill="#ccfdfe"/>
<rect x="814.9" y="1199.5" width="10.5" height="10.4" fill="#d3fdfe"/>
<rect x="824.8" y="1199.5" width="10.5" height="10.4" fill="#d9fdfe"/>
<rect x="834.7" y="1199.5" width="10.5" height="10.4" fill="#e0fdfd"/>
<rect x="844.6" y="1199.5" width="10.5" height="10.4" fill="#e6fdfd"/>
<rect x="854.4" y="1199.5" width="10.5" height="10.4" fill="#ecfdfc"/>
<rect x="864.3" y="1199.5" width="10.5" height="10.4" fill="#f3fdfc"/>
<rect x="874.2" y="1199.5" width="10.5" height="10.4" fill="#f8fdfb"/>
<rect x="884.1" y="1199.5" width="10.5" height="10.4" fill="#fafbf9"/>
<rect x="894.0" y="1199.5" width="10.5" height="10.4" fill="#fcfaf7"/>
<rect x="903.9" y="1199.5" width="10.5" height="10.4" fill="#fef8f4"/>
<rect x="913.8" y="1199.5" width="10.5" height="10.4" fill="#fef5f2"/>
<rect x="923.7" y="1199.5" width="10.5" height="10.4" fill="#fef2ef"/>
<rect x="933.6" y="1199.5" width="10.5" height="10.4" fill="#ffeeec"/>
<rect x="943.4" y="1199.5" width="10.5" height="10.4" fill="#ffebe9"/>
<rect x="953.3" y="1199.5" width="10.5" height="10.4" fill="#ffe7e6"/>
<rect x="963.2" y="1199.5" width="10.5" height="10.4" fill="#ffe3e4"/>
<rect x="973.1" y="1199.5" width="10.5" height="10.4" fill="#ffe0e1"/>
<rect x="983.0" y="1199.5" width="10.5" height="10.4" fill="#ffdcde"/>
<rect x="992.9" y="1199.5" width="10.5" height="10.4" fill="#ffd9da"/>
<rect x="1002.8" y="1199.5" width="10.5" height="10.4" fill="#ffd5d7"/>
<rect x="1012.7" y="1199.5" width="10.5" height="10.4" fill="#ffd2d3"/>
<rect x="1022.6" y="1199.5" width="10.5" height="10.4" fill="#ffced0"/>
<rect x="1032.4" y="1199.5" width="10.5" height="10.4" fill="#ffcbcc"/>
<rect x="1042.3" y="1199.5" width="10.5" height="10.4" fill="#ffc7c9"/>
<rect x="1052.2" y="1199.5" width="10.5" height="10.4" fill="#ffc3c5"/>
<rect x="1062.1" y="1199.5" width="10.5" height="10.4" fill="#ffc0c2"/>
<rect x="1072.0" y="1199.5" width="10.5" height="10.4" fill="#ffbec0"/>
<rect x="706.1" y="1209.3" width="10.5" height="10.4" fill="#a2f9ff"/>
<rect x="716.0" y="1209.3" width="10.5" height="10.4" fill="#a4f9ff"/>
<rect x="725.9" y="1209.3" width="10.5" height="10.4" fill="#a9f9ff"/>
<rect x="735.8" y="1209.3" width="10.5" height="10.4" fill="#adf9ff"/>
<rect x="745.7" y="1209.3" width="10.5" height="10.4" fill="#b2f9ff"/>
<rect x="755.6" y="1209.3" width="10.5" height="10.4" fill="#b7f9ff"/>
<rect x="765.4" y="1209.3" width="10.5" height="10.4" fill="#bbf9ff"/>
<rect x="775.3" y="1209.3" width="10.5" height="10.4" fill="#c0f9ff"/>
<rect x="785.2" y="1209.3" width="10.5" height="10.4" fill="#c5f9ff"/>
<rect x="795.1" y="1209.3" width="10.5" height="10.4" fill="#c9f9ff"/>
<rect x="805.0" y="1209.3" width="10.5" height="10.4" fill="#cff9fe"/>
<rect x="814.9" y="1209.3" width="10.5" height="10.4" fill="#d5f9fe"/>
<rect x="824.8" y="1209.3" width="10.5" height="10.4" fill="#dbf9fe"/>
<rect x="834.7" y="1209.3" width="10.5" height="10.4" fill="#e1fafd"/>
<rect x="844.6" y="1209.3" width="10.5" height="10.4" fill="#e7fafd"/>
<rect x="854.4" y="1209.3" width="10.5" height="10.4" fill="#edfafd"/>
<rect x="864.3" y="1209.3" width="10.5" height="10.4" fill="#f3fbfc"/>
<rect x="874.2" y="1209.3" width="10.5" height="10.4" fill="#f8fafc"/>
<rect x="884.1" y="1209.3" width="10.5" height="10.4" fill="#faf8f9"/>
<rect x="894.0" y="1209.3" width="10.5" height="10.4" fill="#fcf7f7"/>
<rect x="903.9" y="1209.3" width="10.5" height="10.4" fill="#fdf5f4"/>
<rect x="913.8" y="1209.3" width="10.5" height="10.4" fill="#fef2f2"/>
<rect x="923.7" y="1209.3" width="10.5" height="10.4" fill="#feeeef"/>
<rect x="933.6" y="1209.3" width="10.5" height="10.4" fill="#ffebec"/>
<rect x="943.4" y="1209.3" width="10.5" height="10.4" fill="#ffe7e9"/>
<rect x="953.3" y="1209.3" width="10.5" height="10.4" fill="#ffe4e6"/>
<rect x="963.2" y="1209.3" width="10.5" height="10.4" fill="#ffe0e3"/>
<rect x="973.1" y="1209.3" width="10.5" height="10.4" fill="#ffdde0"/>
<rect x="983.0" y="1209.3" width="10.5" height="10.4" fill="#ffd9dd"/>
<rect x="992.9" y="1209.3" width="10.5" height="10.4" fill="#ffd6da"/>
<rect x="1002.8" y="1209.3" width="10.5" height="10.4" fill="#ffd2d6"/>
<rect x="1012.7" y="1209.3" width="10.5" height="10.4" fill="#ffcfd3"/>
<rect x="1022.6" y="1209.3" width="10.5" height="10.4" fill="#ffcbd0"/>
<rect x="1032.4" y="1209.3" width="10.5" height="10.4" fill="#ffc8cd"/>
<rect x="1042.3" y="1209.3" width="10.5" height="10.4" fill="#ffc4ca"/>
<rect x="1052.2" y="1209.3" width="10.5" height="10.4" fill="#ffc1c6"/>
<rect x="1062.1" y="1209.3" width="10.5" height="10.4" fill="#ffbdc3"/>
<rect x="1072.0" y="1209.3" width="10.5" height="10.4" fill="#ffbcc2"/>
<rect x="706.1" y="1219.0" width="10.5" height="10.4" fill="#a3f5ff"/>
<rect x="716.0" y="1219.0" width="10.5" height="10.4" fill="#a5f5ff"/>
<rect x="725.9" y="1219.0" width="10.5" height="10.4" fill="#aaf5ff"/>
<rect x="735.8" y="1219.0" width="10.5" height="10.4" fill="#aff5ff"/>
<rect x="745.7" y="1219.0" width="10.5" height="10.4" fill="#b4f5ff"/>
<rect x="755.6" y="1219.0" width="10.5" height="10.4" fill="#b9f5ff"/>
<rect x="765.4" y="1219.0" width="10.5" height="10.4" fill="#bdf5ff"/>
<rect x="775.3" y="1219.0" width="10.5" height="10.4" fill="#c2f5ff"/>
<rect x="785.2" y="1219.0" width="10.5" height="10.4" fill="#c7f5ff"/>
<rect x="795.1" y="1219.0" width="10.5" height="10.4" fill="#ccf5ff"/>
<rect x="805.0" y="1219.0" width="10.5" height="10.4" fill="#d1f5fe"/>
<rect x="814.9" y="1219.0" width="10.5" height="10.4" fill="#d7f6fe"/>
<rect x="824.8" y="1219.0" width="10.5" height="10.4" fill="#ddf6fe"/>
<rect x="834.7" y="1219.0" width="10.5" height="10.4" fill="#e2f7fe"/>
<rect x="844.6" y="1219.0" width="10.5" height="10.4" fill="#e8f7fd"/>
<rect x="854.4" y="1219.0" width="10.5" height="10.4" fill="#eef7fd"/>
<rect x="864.3" y="1219.0" width="10.5" height="10.4" fill="#f3f8fd"/>
<rect x="874.2" y="1219.0" width="10.5" height="10.4" fill="#f8f8fc"/>
<rect x="884.1" y="1219.0" width="10.5" height="10.4" fill="#faf6fa"/>
<rect x="894.0" y="1219.0" width="10.5" height="10.4" fill="#fbf4f7"/>
<rect x="903.9" y="1219.0" width="10.5" height="10.4" fill="#fdf2f5"/>
<rect x="913.8" y="1219.0" width="10.5" height="10.4" fill="#feeff2"/>
<rect x="923.7" y="1219.0" width="10.5" height="10.4" fill="#feebef"/>
<rect x="933.6" y="1219.0" width="10.5" height="10.4" fill="#ffe8ec"/>
<rect x="943.4" y="1219.0" width="10.5" height="10.4" fill="#ffe4e9"/>
<rect x="953.3" y="1219.0" width="10.5" height="10.4" fill="#ffe1e6"/>
<rect x="963.2" y="1219.0" width="10.5" height="10.4" fill="#ffdde3"/>
<rect x="973.1" y="1219.0" width="10.5" height="10.4" fill="#ffdae0"/>
<rect x="983.0" y="1219.0" width="10.5" height="10.4" fill="#ffd6dd"/>
<rect x="992.9" y="1219.0" width="10.5" height="10.4" fill="#ffd3d9"/>
<rect x="1002.8" y="1219.0" width="10.5" height="10.4" fill="#ffcfd6"/>
<rect x="1012.7" y="1219.0" width="10.5" height="10.4" fill="#ffccd3"/>
<rect x="1022.6" y="1219.0" width="10.5" height="10.4" fill="#ffc8d0"/>
<rect x="1032.4" y="1219.0" width="10.5" height="10.4" fill="#ffc5cd"/>
<rect x="1042.3" y="1219.0" width="10.5" height="10.4" fill="#ffc1ca"/>
<rect x="1052.2" y="1219.0" width="10.5" height="10.4" fill="#ffbec7"/>
<rect x="1062.1" y="1219.0" width="10.5" height="10.4" fill="#ffbbc4"/>
<rect x="1072.0" y="1219.0" width="10.5" height="10.4" fill="#ffb9c3"/>
<rect x="706.1" y="1228.8" width="10.5" height="10.4" fill="#a4f1ff"/>
<rect x="716.0" y="1228.8" width="10.5" height="10.4" fill="#a7f1ff"/>
<rect x="725.9" y="1228.8" width="10.5" height="10.4" fill="#acf1ff"/>
<rect x="735.8" y="1228.8" width="10.5" height="10.4" fill="#b1f1ff"/>
<rect x="745.7" y="1228.8" width="10.5" height="10.4" fill="#b6f1ff"/>
<rect x="755.6" y="1228.8" width="10.5" height="10.4" fill="#bbf1ff"/>
<rect x="765.4" y="1228.8" width="10.5" height="10.4" fill="#bff1ff"/>
<rect x="775.3" y="1228.8" width="10.5" height="10.4" fill="#c4f1ff"/>
<rect x="785.2" y="1228.8" width="10.5" height="10.4" fill="#c9f1ff"/>
<rect x="795.1" y="1228.8" width="10.5" height="10.4" fill="#cef1ff"/>
<rect x="805.0" y="1228.8" width="10.5" height="10.4" fill="#d4f1fe"/>
<rect x="814.9" y="1228.8" width="10.5" height="10.4" fill="#d9f2fe"/>
<rect x="824.8" y="1228.8" width="10.5" height="10.4" fill="#def3fe"/>
<rect x="834.7" y="1228.8" width="10.5" height="10.4" fill="#e4f3fe"/>
<rect x="844.6" y="1228.8" width="10.5" height="10.4" fill="#e9f4fe"/>
<rect x="854.4" y="1228.8" width="10.5" height="10.4" fill="#eef5fe"/>
<rect x="864.3" y="1228.8" width="10.5" height="10.4" fill="#f4f5fd"/>
<rect x="874.2" y="1228.8" width="10.5" height="10.4" fill="#f8f5fc"/>
<rect x="884.1" y="1228.8" width="10.5" height="10.4" fill="#faf3fa"/>
<rect x="894.0" y="1228.8" width="10.5" height="10.4" fill="#fbf0f7"/>
<rect x="903.9" y="1228.8" width="10.5" height="10.4" fill="#fdeef5"/>
<rect x="913.8" y="1228.8" width="10.5" height="10.4" fill="#feebf2"/>
<rect x="923.7" y="1228.8" width="10.5" height="10.4" fill="#fee8ef"/>
<rect x="933.6" y="1228.8" width="10.5" height="10.4" fill="#ffe5ec"/>
<rect x="943.4" y="1228.8" width="10.5" height="10.4" fill="#ffe1e9"/>
<rect x="953.3" y="1228.8" width="10.5" height="10.4" fill="#ffdee6"/>
<rect x="963.2" y="1228.8" width="10.5" height="10.4" fill="#ffdae3"/>
<rect x="973.1" y="1228.8" width="10.5" height="10.4" fill="#ffd7e0"/>
<rect x="983.0" y="1228.8" width="10.5" height="10.4" fill="#ffd3dd"/>
<rect x="992.9" y="1228.8" width="10.5" height="10.4" fill="#ffd0d9"/>
<rect x="1002.8" y="1228.8" width="10.5" height="10.4" fill="#ffccd6"/>
<rect x="1012.7" y="1228.8" width="10.5" height="10.4" fill="#ffc9d3"/>
<rect x="1022.6" y="1228.8" width="10.5" height="10.4" fill="#ffc6d1"/>
<rect x="1032.4" y="1228.8" width="10.5" height="10.4" fill="#ffc2ce"/>
<rect x="1042.3" y="1228.8" width="10.5" height="10.4" fill="#ffbfcb"/>
<rect x="1052.2" y="1228.8" width="10.5" height="10.4" fill="#ffbbc8"/>
<rect x="1062.1" y="1228.8" width="10.5" height="10.4" fill="#ffb8c6"/>
<rect x="1072.0" y="1228.8" width="10.5" height="10.4" fill="#ffb6c4"/>
<rect x="706.1" y="1238.6" width="10.5" height="10.4" fill="#a6edff"/>
<rect x="716.0" y="1238.6" width="10.5" height="10.4" fill="#a8edff"/>
<rect x="725.9" y="1238.6" width="10.5" height="10.4" fill="#adedff"/>
<rect x="735.8" y="1238.6" width="10.5" height="10.4" fill="#b2edff"/>
<rect x="745.7" y="1238.6" width="10.5" height="10.4" fill="#b7edff"/>
<rect x="755.6" y="1238.6" width="10.5" height="10.4" fill="#bdedff"/>
<rect x="765.4" y="1238.6" width="10.5" height="10.4" fill="#c2edff"/>
<rect x="775.3" y="1238.6" width="10.5" height="10.4" fill="#c7edff"/>
<rect x="785.2" y="1238.6" width="10.5" height="10.4" fill="#ccedff"/>
<rect x="795.1" y="1238.6" width="10.5" height="10.4" fill="#d1edff"/>
<rect x="805.0" y="1238.6" width="10.5" height="10.4" fill="#d6eefe"/>
<rect x="814.9" y="1238.6" width="10.5" height="10.4" fill="#dbeffe"/>
<rect x="824.8" y="1238.6" width="10.5" height="10.4" fill="#e0effe"/>
<rect x="834.7" y="1238.6" width="10.5" height="10.4" fill="#e5f0fe"/>
<rect x="844.6" y="1238.6" width="10.5" height="10.4" fill="#eaf1fe"/>
<rect x="854.4" y="1238.6" width="10.5" height="10.4" fill="#eff2fe"/>
<rect x="864.3" y="1238.6" width="10.5" height="10.4" fill="#f4f3fe"/>
<rect x="874.2" y="1238.6" width="10.5" height="10.4" fill="#f8f2fd"/>
<rect x="884.1" y="1238.6" width="10.5" height="10.4" fill="#f9f0fa"/>
<rect x="894.0" y="1238.6" width="10.5" height="10.4" fill="#fbedf8"/>
<rect x="903.9" y="1238.6" width="10.5" height="10.4" fill="#fcebf5"/>
<rect x="913.8" y="1238.6" width="10.5" height="10.4" fill="#fde8f2"/>
<rect x="923.7" y="1238.6" width="10.5" height="10.4" fill="#fee5f0"/>
<rect x="933.6" y="1238.6" width="10.5" height="10.4" fill="#ffe1ec"/>
<rect x="943.4" y="1238.6" width="10.5" height="10.4" fill="#ffdee9"/>
<rect x="953.3" y="1238.6" width="10.5" height="10.4" fill="#ffdbe6"/>
<rect x="963.2" y="1238.6" width="10.5" height="10.4" fill="#ffd7e3"/>
<rect x="973.1" y="1238.6" width="10.5" height="10.4" fill="#ffd4e0"/>
<rect x="983.0" y="1238.6" width="10.5" height="10.4" fill="#ffd0dc"/>
<rect x="992.9" y="1238.6" width="10.5" height="10.4" fill="#ffcdd9"/>
<rect x="1002.8" y="1238.6" width="10.5" height="10.4" fill="#ffcad6"/>
<rect x="1012.7" y="1238.6" width="10.5" height="10.4" fill="#ffc6d4"/>
<rect x="1022.6" y="1238.6" width="10.5" height="10.4" fill="#ffc3d1"/>
<rect x="1032.4" y="1238.6" width="10.5" height="10.4" fill="#ffbfce"/>
<rect x="1042.3" y="1238.6" width="10.5" height="10.4" fill="#ffbccc"/>
<rect x="1052.2" y="1238.6" width="10.5" height="10.4" fill="#ffb9c9"/>
<rect x="1062.1" y="1238.6" width="10.5" height="10.4" fill="#ffb5c7"/>
<rect x="1072.0" y="1238.6" width="10.5" height="10.4" fill="#ffb4c6"/>
<rect x="706.1" y="1248.4" width="10.5" height="10.4" fill="#a7e9ff"/>
<rect x="716.0" y="1248.4" width="10.5" height="10.4" fill="#a9e9ff"/>
<rect x="725.9" y="1248.4" width="10.5" height="10.4" fill="#afe9ff"/>
<rect x="735.8" y="1248.4" width="10.5" height="10.4" fill="#b4e9ff"/>
<rect x="745.7" y="1248.4" width="10.5" height="10.4" fill="#b9e9ff"/>
<rect x="755.6" y="1248.4" width="10.5" height="10.4" fill="#bfe9ff"/>
<rect x="765.4" y="1248.4" width="10.5" height="10.4" fill="#c4e9ff"/>
<rect x="775.3" y="1248.4" width="10.5" height="10.4" fill="#c9e9ff"/>
<rect x="785.2" y="1248.4" width="10.5" height="10.4" fill="#cee9ff"/>
<rect x="795.1" y="1248.4" width="10.5" height="10.4" fill="#d4e9ff"/>
<rect x="805.0" y="1248.4" width="10.5" height="10.4" fill="#d8eafe"/>
<rect x="814.9" y="1248.4" width="10.5" height="10.4" fill="#ddebfe"/>
<rect x="824.8" y="1248.4" width="10.5" height="10.4" fill="#e2ecfe"/>
<rect x="834.7" y="1248.4" width="10.5" height="10.4" fill="#e6edfe"/>
<rect x="844.6" y="1248.4" width="10.5" height="10.4" fill="#ebeefe"/>
<rect x="854.4" y="1248.4" width="10.5" height="10.4" fill="#f0effe"/>
<rect x="864.3" y="1248.4" width="10.5" height="10.4" fill="#f4f0fe"/>
<rect x="874.2" y="1248.4" width="10.5" height="10.4" fill="#f8f0fd"/>
<rect x="884.1" y="1248.4" width="10.5" height="10.4" fill="#f9edfb"/>
<rect x="894.0" y="1248.4" width="10.5" height="10.4" fill="#fbeaf8"/>
<rect x="903.9" y="1248.4" width="10.5" height="10.4" fill="#fce7f5"/>
<rect x="913.8" y="1248.4" width="10.5" height="10.4" fill="#fde4f2"/>
<rect x="923.7" y="1248.4" width="10.5" height="10.4" fill="#fee1f0"/>
<rect x="933.6" y="1248.4" width="10.5" height="10.4" fill="#ffdeec"/>
<rect x="943.4" y="1248.4" width="10.5" height="10.4" fill="#ffdbe9"/>
<rect x="953.3" y="1248.4" width="10.5" height="10.4" fill="#ffd7e6"/>
<rect x="963.2" y="1248.4" width="10.5" height="10.4" fill="#ffd4e3"/>
<rect x="973.1" y="1248.4" width="10.5" height="10.4" fill="#ffd1df"/>
<rect x="983.0" y="1248.4" width="10.5" height="10.4" fill="#ffcddc"/>
<rect x="992.9" y="1248.4" width="10.5" height="10.4" fill="#ffcad9"/>
<rect x="1002.8" y="1248.4" width="10.5" height="10.4" fill="#ffc7d6"/>
<rect x="1012.7" y="1248.4" width="10.5" height="10.4" fill="#ffc3d4"/>
<rect x="1022.6" y="1248.4" width="10.5" height="10.4" fill="#ffc0d1"/>
<rect x="1032.4" y="1248.4" width="10.5" height="10.4" fill="#ffbdcf"/>
<rect x="1042.3" y="1248.4" width="10.5" height="10.4" fill="#ffb9cd"/>
<rect x="1052.2" y="1248.4" width="10.5" height="10.4" fill="#ffb6ca"/>
<rect x="1062.1" y="1248.4" width="10.5" height="10.4" fill="#ffb3c8"/>
<rect x="1072.0" y="1248.4" width="10.5" height="10.4" fill="#ffb1c7"/>
<rect x="706.1" y="1258.2" width="10.5" height="10.4" fill="#a8e5ff"/>
<rect x="716.0" y="1258.2" width="10.5" height="10.4" fill="#aae5ff"/>
<rect x="725.9" y="1258.2" width="10.5" height="10.4" fill="#afe5ff"/>
<rect x="735.8" y="1258.2" width="10.5" height="10.4" fill="#b5e5ff"/>
<rect x="745.7" y="1258.2" width="10.5" height="10.4" fill="#bae5ff"/>
<rect x="755.6" y="1258.2" width="10.5" height="10.4" fill="#bfe5ff"/>
<rect x="765.4" y="1258.2" width="10.5" height="10.4" fill="#c4e5ff"/>
<rect x="775.3" y="1258.2" width="10.5" height="10.4" fill="#cae5ff"/>
<rect x="785.2" y="1258.2" width="10.5" height="10.4" fill="#cfe5ff"/>
<rect x="795.1" y="1258.2" width="10.5" height="10.4" fill="#d4e5ff"/>
<rect x="805.0" y="1258.2" width="10.5" height="10.4" fill="#d9e5ff"/>
<rect x="814.9" y="1258.2" width="10.5" height="10.4" fill="#dee6ff"/>
<rect x="824.8" y="1258.2" width="10.5" height="10.4" fill="#e2e7ff"/>
<rect x="834.7" y="1258.2" width="10.5" height="10.4" fill="#e6e8ff"/>
<rect x="844.6" y="1258.2" width="10.5" height="10.4" fill="#ebe9ff"/>
<rect x="854.4" y="1258.2" width="10.5" height="10.4" fill="#efeafe"/>
<rect x="864.3" y="1258.2" width="10.5" height="10.4" fill="#f4ebfe"/>
<rect x="874.2" y="1258.2" width="10.5" height="10.4" fill="#f7ebfd"/>
<rect x="884.1" y="1258.2" width="10.5" height="10.4" fill="#f9e9fb"/>
<rect x="894.0" y="1258.2" width="10.5" height="10.4" fill="#fbe6f8"/>
<rect x="903.9" y="1258.2" width="10.5" height="10.4" fill="#fce3f5"/>
<rect x="913.8" y="1258.2" width="10.5" height="10.4" fill="#fde0f2"/>
<rect x="923.7" y="1258.2" width="10.5" height="10.4" fill="#feddf0"/>
<rect x="933.6" y="1258.2" width="10.5" height="10.4" fill="#ffdaec"/>
<rect x="943.4" y="1258.2" width="10.5" height="10.4" fill="#ffd7e9"/>
<rect x="953.3" y="1258.2" width="10.5" height="10.4" fill="#ffd3e5"/>
<rect x="963.2" y="1258.2" width="10.5" height="10.4" fill="#ffd0e2"/>
<rect x="973.1" y="1258.2" width="10.5" height="10.4" fill="#ffcddf"/>
<rect x="983.0" y="1258.2" width="10.5" height="10.4" fill="#ffc9db"/>
<rect x="992.9" y="1258.2" width="10.5" height="10.4" fill="#ffc6d8"/>
<rect x="1002.8" y="1258.2" width="10.5" height="10.4" fill="#ffc3d6"/>
<rect x="1012.7" y="1258.2" width="10.5" height="10.4" fill="#ffbfd3"/>
<rect x="1022.6" y="1258.2" width="10.5" height="10.4" fill="#ffbcd1"/>
<rect x="1032.4" y="1258.2" width="10.5" height="10.4" fill="#ffb9cf"/>
<rect x="1042.3" y="1258.2" width="10.5" height="10.4" fill="#ffb5cc"/>
<rect x="1052.2" y="1258.2" width="10.5" height="10.4" fill="#ffb2ca"/>
<rect x="1062.1" y="1258.2" width="10.5" height="10.4" fill="#ffafc8"/>
<rect x="1072.0" y="1258.2" width="10.5" height="10.4" fill="#ffadc7"/>
<rect x="706.1" y="1267.9" width="10.5" height="10.4" fill="#a8e0ff"/>
<rect x="716.0" y="1267.9" width="10.5" height="10.4" fill="#aae0ff"/>
<rect x="725.9" y="1267.9" width="10.5" height="10.4" fill="#afe0ff"/>
<rect x="735.8" y="1267.9" width="10.5" height="10.4" fill="#b4e0ff"/>
<rect x="745.7" y="1267.9" width="10.5" height="10.4" fill="#b9e0ff"/>
<rect x="755.6" y="1267.9" width="10.5" height="10.4" fill="#bfe0ff"/>
<rect x="765.4" y="1267.9" width="10.5" height="10.4" fill="#c4e0ff"/>
<rect x="775.3" y="1267.9" width="10.5" height="10.4" fill="#c9e0ff"/>
<rect x="785.2" y="1267.9" width="10.5" height="10.4" fill="#cee0ff"/>
<rect x="795.1" y="1267.9" width="10.5" height="10.4" fill="#d3e0ff"/>
<rect x="805.0" y="1267.9" width="10.5" height="10.4" fill="#d8e0ff"/>
<rect x="814.9" y="1267.9" width="10.5" height="10.4" fill="#dce1ff"/>
<rect x="824.8" y="1267.9" width="10.5" height="10.4" fill="#e1e2ff"/>
<rect x="834.7" y="1267.9" width="10.5" height="10.4" fill="#e5e2ff"/>
<rect x="844.6" y="1267.9" width="10.5" height="10.4" fill="#eae3ff"/>
<rect x="854.4" y="1267.9" width="10.5" height="10.4" fill="#eee4fe"/>
<rect x="864.3" y="1267.9" width="10.5" height="10.4" fill="#f3e5fe"/>
<rect x="874.2" y="1267.9" width="10.5" height="10.4" fill="#f7e5fd"/>
<rect x="884.1" y="1267.9" width="10.5" height="10.4" fill="#f9e3fb"/>
<rect x="894.0" y="1267.9" width="10.5" height="10.4" fill="#fbe0f8"/>
<rect x="903.9" y="1267.9" width="10.5" height="10.4" fill="#fcdef5"/>
<rect x="913.8" y="1267.9" width="10.5" height="10.4" fill="#fddbf2"/>
<rect x="923.7" y="1267.9" width="10.5" height="10.4" fill="#fed8ef"/>
<rect x="933.6" y="1267.9" width="10.5" height="10.4" fill="#ffd5ec"/>
<rect x="943.4" y="1267.9" width="10.5" height="10.4" fill="#ffd1e8"/>
<rect x="953.3" y="1267.9" width="10.5" height="10.4" fill="#ffcee5"/>
<rect x="963.2" y="1267.9" width="10.5" height="10.4" fill="#ffcbe1"/>
<rect x="973.1" y="1267.9" width="10.5" height="10.4" fill="#ffc8de"/>
<rect x="983.0" y="1267.9" width="10.5" height="10.4" fill="#ffc4da"/>
<rect x="992.9" y="1267.9" width="10.5" height="10.4" fill="#ffc1d7"/>
<rect x="1002.8" y="1267.9" width="10.5" height="10.4" fill="#ffbed5"/>
<rect x="1012.7" y="1267.9" width="10.5" height="10.4" fill="#ffbad2"/>
<rect x="1022.6" y="1267.9" width="10.5" height="10.4" fill="#ffb7d0"/>
<rect x="1032.4" y="1267.9" width="10.5" height="10.4" fill="#ffb3ce"/>
<rect x="1042.3" y="1267.9" width="10.5" height="10.4" fill="#ffb0cb"/>
<rect x="1052.2" y="1267.9" width="10.5" height="10.4" fill="#ffadc9"/>
<rect x="1062.1" y="1267.9" width="10.5" height="10.4" fill="#ffa9c7"/>
<rect x="1072.0" y="1267.9" width="10.5" height="10.4" fill="#ffa8c6"/>
<rect x="706.1" y="1277.7" width="10.5" height="10.4" fill="#a8daff"/>
<rect x="716.0" y="1277.7" width="10.5" height="10.4" fill="#aadaff"/>
<rect x="725.9" y="1277.7" width="10.5" height="10.4" fill="#afdaff"/>
<rect x="735.8" y="1277.7" width="10.5" height="10.4" fill="#b4daff"/>
<rect x="745.7" y="1277.7" width="10.5" height="10.4" fill="#b9daff"/>
<rect x="755.6" y="1277.7" width="10.5" height="10.4" fill="#bedaff"/>
<rect x="765.4" y="1277.7" width="10.5" height="10.4" fill="#c3daff"/>
<rect x="775.3" y="1277.7" width="10.5" height="10.4" fill="#c8daff"/>
<rect x="785.2" y="1277.7" width="10.5" height="10.4" fill="#cddaff"/>
<rect x="795.1" y="1277.7" width="10.5" height="10.4" fill="#d2daff"/>
<rect x="805.0" y="1277.7" width="10.5" height="10.4" fill="#d6daff"/>
<rect x="814.9" y="1277.7" width="10.5" height="10.4" fill="#dbdbff"/>
<rect x="824.8" y="1277.7" width="10.5" height="10.4" fill="#dfdcff"/>
<rect x="834.7" y="1277.7" width="10.5" height="10.4" fill="#e4dcff"/>
<rect x="844.6" y="1277.7" width="10.5" height="10.4" fill="#e8ddff"/>
<rect x="854.4" y="1277.7" width="10.5" height="10.4" fill="#eddefe"/>
<rect x="864.3" y="1277.7" width="10.5" height="10.4" fill="#f1defe"/>
<rect x="874.2" y="1277.7" width="10.5" height="10.4" fill="#f6defd"/>
<rect x="884.1" y="1277.7" width="10.5" height="10.4" fill="#f9ddfa"/>
<rect x="894.0" y="1277.7" width="10.5" height="10.4" fill="#fcdbf8"/>
<rect x="903.9" y="1277.7" width="10.5" height="10.4" fill="#fdd8f5"/>
<rect x="913.8" y="1277.7" width="10.5" height="10.4" fill="#fed5f2"/>
<rect x="923.7" y="1277.7" width="10.5" height="10.4" fill="#fed2ef"/>
<rect x="933.6" y="1277.7" width="10.5" height="10.4" fill="#ffcfeb"/>
<rect x="943.4" y="1277.7" width="10.5" height="10.4" fill="#ffcce7"/>
<rect x="953.3" y="1277.7" width="10.5" height="10.4" fill="#ffc9e4"/>
<rect x="963.2" y="1277.7" width="10.5" height="10.4" fill="#ffc6e0"/>
<rect x="973.1" y="1277.7" width="10.5" height="10.4" fill="#ffc3dd"/>
<rect x="983.0" y="1277.7" width="10.5" height="10.4" fill="#ffbfd9"/>
<rect x="992.9" y="1277.7" width="10.5" height="10.4" fill="#ffbcd6"/>
<rect x="1002.8" y="1277.7" width="10.5" height="10.4" fill="#ffb8d4"/>
<rect x="1012.7" y="1277.7" width="10.5" height="10.4" fill="#ffb5d1"/>
<rect x="1022.6" y="1277.7" width="10.5" height="10.4" fill="#ffb2cf"/>
<rect x="1032.4" y="1277.7" width="10.5" height="10.4" fill="#ffaecd"/>
<rect x="1042.3" y="1277.7" width="10.5" height="10.4" fill="#ffabca"/>
<rect x="1052.2" y="1277.7" width="10.5" height="10.4" fill="#ffa7c8"/>
<rect x="1062.1" y="1277.7" width="10.5" height="10.4" fill="#ffa4c5"/>
<rect x="1072.0" y="1277.7" width="10.5" height="10.4" fill="#ffa2c4"/>
<rect x="706.1" y="1287.5" width="10.5" height="10.4" fill="#a8d5ff"/>
<rect x="716.0" y="1287.5" width="10.5" height="10.4" fill="#aad5ff"/>
<rect x="725.9" y="1287.5" width="10.5" height="10.4" fill="#afd5ff"/>
<rect x="735.8" y="1287.5" width="10.5" height="10.4" fill="#b4d5ff"/>
<rect x="745.7" y="1287.5" width="10.5" height="10.4" fill="#b8d5ff"/>
<rect x="755.6" y="1287.5" width="10.5" height="10.4" fill="#bdd5ff"/>
<rect x="765.4" y="1287.5" width="10.5" height="10.4" fill="#c2d5ff"/>
<rect x="775.3" y="1287.5" width="10.5" height="10.4" fill="#c7d5ff"/>
<rect x="785.2" y="1287.5" width="10.5" height="10.4" fill="#ccd5ff"/>
<rect x="795.1" y="1287.5" width="10.5" height="10.4" fill="#d0d5ff"/>
<rect x="805.0" y="1287.5" width="10.5" height="10.4" fill="#d5d5ff"/>
<rect x="814.9" y="1287.5" width="10.5" height="10.4" fill="#dad6ff"/>
<rect x="824.8" y="1287.5" width="10.5" height="10.4" fill="#ded6ff"/>
<rect x="834.7" y="1287.5" width="10.5" height="10.4" fill="#e2d6ff"/>
<rect x="844.6" y="1287.5" width="10.5" height="10.4" fill="#e7d7ff"/>
<rect x="854.4" y="1287.5" width="10.5" height="10.4" fill="#ebd7fe"/>
<rect x="864.3" y="1287.5" width="10.5" height="10.4" fill="#f0d8fd"/>
<rect x="874.2" y="1287.5" width="10.5" height="10.4" fill="#f5d8fc"/>
<rect x="884.1" y="1287.5" width="10.5" height="10.4" fill="#f8d7fa"/>
<rect x="894.0" y="1287.5" width="10.5" height="10.4" fill="#fcd5f8"/>
<rect x="903.9" y="1287.5" width="10.5" height="10.4" fill="#fdd3f5"/>
<rect x="913.8" y="1287.5" width="10.5" height="10.4" fill="#fed0f1"/>
<rect x="923.7" y="1287.5" width="10.5" height="10.4" fill="#fecdee"/>
<rect x="933.6" y="1287.5" width="10.5" height="10.4" fill="#ffcaea"/>
<rect x="943.4" y="1287.5" width="10.5" height="10.4" fill="#ffc7e7"/>
<rect x="953.3" y="1287.5" width="10.5" height="10.4" fill="#ffc4e3"/>
<rect x="963.2" y="1287.5" width="10.5" height="10.4" fill="#ffc1df"/>
<rect x="973.1" y="1287.5" width="10.5" height="10.4" fill="#ffbedc"/>
<rect x="983.0" y="1287.5" width="10.5" height="10.4" fill="#ffbad9"/>
<rect x="992.9" y="1287.5" width="10.5" height="10.4" fill="#ffb7d6"/>
<rect x="1002.8" y="1287.5" width="10.5" height="10.4" fill="#ffb3d3"/>
<rect x="1012.7" y="1287.5" width="10.5" height="10.4" fill="#ffb0d0"/>
<rect x="1022.6" y="1287.5" width="10.5" height="10.4" fill="#ffacce"/>
<rect x="1032.4" y="1287.5" width="10.5" height="10.4" fill="#ffa9cc"/>
<rect x="1042.3" y="1287.5" width="10.5" height="10.4" fill="#ffa5c9"/>
<rect x="1052.2" y="1287.5" width="10.5" height="10.4" fill="#ffa2c7"/>
<rect x="1062.1" y="1287.5" width="10.5" height="10.4" fill="#ff9fc4"/>
<rect x="1072.0" y="1287.5" width="10.5" height="10.4" fill="#ff9dc3"/>
<rect x="706.1" y="1297.2" width="10.5" height="10.4" fill="#a8d0ff"/>
<rect x="716.0" y="1297.2" width="10.5" height="10.4" fill="#aad0ff"/>
<rect x="725.9" y="1297.2" width="10.5" height="10.4" fill="#afd0ff"/>
<rect x="735.8" y="1297.2" width="10.5" height="10.4" fill="#b3d0ff"/>
<rect x="745.7" y="1297.2" width="10.5" height="10.4" fill="#b8d0ff"/>
<rect x="755.6" y="1297.2" width="10.5" height="10.4" fill="#bdd0ff"/>
<rect x="765.4" y="1297.2" width="10.5" height="10.4" fill="#c1d0ff"/>
<rect x="775.3" y="1297.2" width="10.5" height="10.4" fill="#c6d0ff"/>
<rect x="785.2" y="1297.2" width="10.5" height="10.4" fill="#cbd0ff"/>
<rect x="795.1" y="1297.2" width="10.5" height="10.4" fill="#cfd0ff"/>
<rect x="805.0" y="1297.2" width="10.5" height="10.4" fill="#d4d0ff"/>
<rect x="814.9" y="1297.2" width="10.5" height="10.4" fill="#d8d0ff"/>
<rect x="824.8" y="1297.2" width="10.5" height="10.4" fill="#ddd0ff"/>
<rect x="834.7" y="1297.2" width="10.5" height="10.4" fill="#e1d0ff"/>
<rect x="844.6" y="1297.2" width="10.5" height="10.4" fill="#e6d1ff"/>
<rect x="854.4" y="1297.2" width="10.5" height="10.4" fill="#ead1fe"/>
<rect x="864.3" y="1297.2" width="10.5" height="10.4" fill="#efd1fd"/>
<rect x="874.2" y="1297.2" width="10.5" height="10.4" fill="#f4d1fc"/>
<rect x="884.1" y="1297.2" width="10.5" height="10.4" fill="#f8d1fa"/>
<rect x="894.0" y="1297.2" width="10.5" height="10.4" fill="#fdd0f8"/>
<rect x="903.9" y="1297.2" width="10.5" height="10.4" fill="#fecdf5"/>
<rect x="913.8" y="1297.2" width="10.5" height="10.4" fill="#fecaf1"/>
<rect x="923.7" y="1297.2" width="10.5" height="10.4" fill="#fec8ee"/>
<rect x="933.6" y="1297.2" width="10.5" height="10.4" fill="#ffc5ea"/>
<rect x="943.4" y="1297.2" width="10.5" height="10.4" fill="#ffc2e6"/>
<rect x="953.3" y="1297.2" width="10.5" height="10.4" fill="#ffbfe2"/>
<rect x="963.2" y="1297.2" width="10.5" height="10.4" fill="#ffbcdf"/>
<rect x="973.1" y="1297.2" width="10.5" height="10.4" fill="#ffb9db"/>
<rect x="983.0" y="1297.2" width="10.5" height="10.4" fill="#ffb5d8"/>
<rect x="992.9" y="1297.2" width="10.5" height="10.4" fill="#ffb2d5"/>
<rect x="1002.8" y="1297.2" width="10.5" height="10.4" fill="#ffaed2"/>
<rect x="1012.7" y="1297.2" width="10.5" height="10.4" fill="#ffabd0"/>
<rect x="1022.6" y="1297.2" width="10.5" height="10.4" fill="#ffa7cd"/>
<rect x="1032.4" y="1297.2" width="10.5" height="10.4" fill="#ffa4ca"/>
<rect x="1042.3" y="1297.2" width="10.5" height="10.4" fill="#ffa0c8"/>
<rect x="1052.2" y="1297.2" width="10.5" height="10.4" fill="#ff9dc5"/>
<rect x="1062.1" y="1297.2" width="10.5" height="10.4" fill="#ff99c3"/>
<rect x="1072.0" y="1297.2" width="10.5" height="10.4" fill="#ff98c2"/>
<rect x="706.1" y="1307.0" width="10.5" height="10.4" fill="#a8caff"/>
<rect x="716.0" y="1307.0" width="10.5" height="10.4" fill="#aacaff"/>
<rect x="725.9" y="1307.0" width="10.5" height="10.4" fill="#aecaff"/>
<rect x="735.8" y="1307.0" width="10.5" height="10.4" fill="#b3caff"/>
<rect x="745.7" y="1307.0" width="10.5" height="10.4" fill="#b7caff"/>
<rect x="755.6" y="1307.0" width="10.5" height="10.4" fill="#bccaff"/>
<rect x="765.4" y="1307.0" width="10.5" height="10.4" fill="#c0caff"/>
<rect x="775.3" y="1307.0" width="10.5" height="10.4" fill="#c5caff"/>
<rect x="785.2" y="1307.0" width="10.5" height="10.4" fill="#c9caff"/>
<rect x="795.1" y="1307.0" width="10.5" height="10.4" fill="#cecaff"/>
<rect x="805.0" y="1307.0" width="10.5" height="10.4" fill="#d2caff"/>
<rect x="814.9" y="1307.0" width="10.5" height="10.4" fill="#d7caff"/>
<rect x="824.8" y="1307.0" width="10.5" height="10.4" fill="#dbcaff"/>
<rect x="834.7" y="1307.0" width="10.5" height="10.4" fill="#e0caff"/>
<rect x="844.6" y="1307.0" width="10.5" height="10.4" fill="#e4cbff"/>
<rect x="854.4" y="1307.0" width="10.5" height="10.4" fill="#e9cbfe"/>
<rect x="864.3" y="1307.0" width="10.5" height="10.4" fill="#eecbfd"/>
<rect x="874.2" y="1307.0" width="10.5" height="10.4" fill="#f3cbfb"/>
<rect x="884.1" y="1307.0" width="10.5" height="10.4" fill="#f8cbfa"/>
<rect x="894.0" y="1307.0" width="10.5" height="10.4" fill="#fdcaf8"/>
<rect x="903.9" y="1307.0" width="10.5" height="10.4" fill="#fec8f5"/>
<rect x="913.8" y="1307.0" width="10.5" height="10.4" fill="#fec5f1"/>
<rect x="923.7" y="1307.0" width="10.5" height="10.4" fill="#fec2ed"/>
<rect x="933.6" y="1307.0" width="10.5" height="10.4" fill="#ffbfe9"/>
<rect x="943.4" y="1307.0" width="10.5" height="10.4" fill="#ffbce5"/>
<rect x="953.3" y="1307.0" width="10.5" height="10.4" fill="#ffb9e2"/>
<rect x="963.2" y="1307.0" width="10.5" height="10.4" fill="#ffb6de"/>
<rect x="973.1" y="1307.0" width="10.5" height="10.4" fill="#ffb3da"/>
<rect x="983.0" y="1307.0" width="10.5" height="10.4" fill="#ffb0d7"/>
<rect x="992.9" y="1307.0" width="10.5" height="10.4" fill="#ffadd4"/>
<rect x="1002.8" y="1307.0" width="10.5" height="10.4" fill="#ffa9d1"/>
<rect x="1012.7" y="1307.0" width="10.5" height="10.4" fill="#ffa6cf"/>
<rect x="1022.6" y="1307.0" width="10.5" height="10.4" fill="#ffa2cc"/>
<rect x="1032.4" y="1307.0" width="10.5" height="10.4" fill="#ff9fc9"/>
<rect x="1042.3" y="1307.0" width="10.5" height="10.4" fill="#ff9bc7"/>
<rect x="1052.2" y="1307.0" width="10.5" height="10.4" fill="#ff97c4"/>
<rect x="1062.1" y="1307.0" width="10.5" height="10.4" fill="#ff94c1"/>
<rect x="1072.0" y="1307.0" width="10.5" height="10.4" fill="#ff92c0"/>
<rect x="706.1" y="1316.8" width="10.5" height="10.4" fill="#a8c8ff"/>
<rect x="716.0" y="1316.8" width="10.5" height="10.4" fill="#aac8ff"/>
<rect x="725.9" y="1316.8" width="10.5" height="10.4" fill="#aec8ff"/>
<rect x="735.8" y="1316.8" width="10.5" height="10.4" fill="#b3c8ff"/>
<rect x="745.7" y="1316.8" width="10.5" height="10.4" fill="#b7c8ff"/>
<rect x="755.6" y="1316.8" width="10.5" height="10.4" fill="#bcc8ff"/>
<rect x="765.4" y="1316.8" width="10.5" height="10.4" fill="#c0c8ff"/>
<rect x="775.3" y="1316.8" width="10.5" height="10.4" fill="#c4c8ff"/>
<rect x="785.2" y="1316.8" width="10.5" height="10.4" fill="#c9c8ff"/>
<rect x="795.1" y="1316.8" width="10.5" height="10.4" fill="#cdc8ff"/>
<rect x="805.0" y="1316.8" width="10.5" height="10.4" fill="#d2c8ff"/>
<rect x="814.9" y="1316.8" width="10.5" height="10.4" fill="#d6c8ff"/>
<rect x="824.8" y="1316.8" width="10.5" height="10.4" fill="#dbc8ff"/>
<rect x="834.7" y="1316.8" width="10.5" height="10.4" fill="#dfc8ff"/>
<rect x="844.6" y="1316.8" width="10.5" height="10.4" fill="#e4c8ff"/>
<rect x="854.4" y="1316.8" width="10.5" height="10.4" fill="#e8c8fe"/>
<rect x="864.3" y="1316.8" width="10.5" height="10.4" fill="#edc8fd"/>
<rect x="874.2" y="1316.8" width="10.5" height="10.4" fill="#f3c8fb"/>
<rect x="884.1" y="1316.8" width="10.5" height="10.4" fill="#f8c8f9"/>
<rect x="894.0" y="1316.8" width="10.5" height="10.4" fill="#fdc8f8"/>
<rect x="903.9" y="1316.8" width="10.5" height="10.4" fill="#ffc5f4"/>
<rect x="913.8" y="1316.8" width="10.5" height="10.4" fill="#ffc2f1"/>
<rect x="923.7" y="1316.8" width="10.5" height="10.4" fill="#ffbfed"/>
<rect x="933.6" y="1316.8" width="10.5" height="10.4" fill="#ffbde9"/>
<rect x="943.4" y="1316.8" width="10.5" height="10.4" fill="#ffbae5"/>
<rect x="953.3" y="1316.8" width="10.5" height="10.4" fill="#ffb7e1"/>
<rect x="963.2" y="1316.8" width="10.5" height="10.4" fill="#ffb4dd"/>
<rect x="973.1" y="1316.8" width="10.5" height="10.4" fill="#ffb1d9"/>
<rect x="983.0" y="1316.8" width="10.5" height="10.4" fill="#ffaed6"/>
<rect x="992.9" y="1316.8" width="10.5" height="10.4" fill="#ffaad4"/>
<rect x="1002.8" y="1316.8" width="10.5" height="10.4" fill="#ffa7d1"/>
<rect x="1012.7" y="1316.8" width="10.5" height="10.4" fill="#ffa3ce"/>
<rect x="1022.6" y="1316.8" width="10.5" height="10.4" fill="#ffa0cc"/>
<rect x="1032.4" y="1316.8" width="10.5" height="10.4" fill="#ff9cc9"/>
<rect x="1042.3" y="1316.8" width="10.5" height="10.4" fill="#ff98c6"/>
<rect x="1052.2" y="1316.8" width="10.5" height="10.4" fill="#ff95c4"/>
<rect x="1062.1" y="1316.8" width="10.5" height="10.4" fill="#ff91c1"/>
<rect x="1072.0" y="1316.8" width="10.5" height="10.4" fill="#ff90c0"/>
</g></g>
<rect x="716" y="1082.2" width="356" height="234.6" fill="none" stroke="#8c8c8c" stroke-width="2"/>
<clipPath id="clipCIE"><rect x="716" y="1082.2" width="356" height="234.5999999999999"/></clipPath>
<g clip-path="url(#clipCIE)">
<line x1="759.3" y1="1316.3" x2="1072" y2="1119.3" stroke="#000" stroke-width="3.2"/>
</g>
<line x1="707.0" y1="1149.7" x2="716.0" y2="1149.7" stroke="#8c8c8c" stroke-width="1.8"/>
<text x="706.0" y="1156.7" font-size="19" fill="#d8d8d8" text-anchor="end">0.34</text>
<line x1="707.0" y1="1243.5" x2="716.0" y2="1243.5" stroke="#8c8c8c" stroke-width="1.8"/>
<text x="706.0" y="1250.5" font-size="19" fill="#d8d8d8" text-anchor="end">0.32</text>
<line x1="732.0" y1="1316.8" x2="732.0" y2="1324.8" stroke="#8c8c8c" stroke-width="1.8"/>
<text x="732.0" y="1346.0" font-size="19" fill="#d8d8d8" text-anchor="middle">0.29</text>
<line x1="803.2" y1="1316.8" x2="803.2" y2="1324.8" stroke="#8c8c8c" stroke-width="1.8"/>
<text x="803.2" y="1346.0" font-size="19" fill="#d8d8d8" text-anchor="middle">0.3</text>
<line x1="874.5" y1="1316.8" x2="874.5" y2="1324.8" stroke="#8c8c8c" stroke-width="1.8"/>
<text x="874.5" y="1346.0" font-size="19" fill="#d8d8d8" text-anchor="middle">0.31</text>
<line x1="945.8" y1="1316.8" x2="945.8" y2="1324.8" stroke="#8c8c8c" stroke-width="1.8"/>
<text x="945.8" y="1346.0" font-size="19" fill="#d8d8d8" text-anchor="middle">0.32</text>
<line x1="1017.0" y1="1316.8" x2="1017.0" y2="1324.8" stroke="#8c8c8c" stroke-width="1.8"/>
<text x="1017.0" y="1346.0" font-size="19" fill="#d8d8d8" text-anchor="middle">0.33</text>
<circle cx="1039.7" cy="1178.3" r="6.5" fill="#000"/>
<circle cx="911" cy="1172.9" r="6.8" fill="#333" stroke="#000" stroke-width="1"/>
<circle cx="891.4" cy="1181.9" r="5.9" fill="#fff" stroke="#000" stroke-width="1.1"/>
<rect x="884.3" y="1188.2" width="18.9" height="18.8" fill="none" stroke="#000" stroke-width="1.7"/>
<circle cx="906.5" cy="1192.5" r="6" fill="#555" stroke="#000" stroke-width="0.9"/>
<circle cx="914.5" cy="1195" r="6" fill="#999" stroke="#000" stroke-width="0.9"/>
<circle cx="913.9" cy="1203.9" r="6" fill="#aaa" stroke="#000" stroke-width="0.9"/>
<circle cx="909.2" cy="1201.6" r="6" fill="#ccc" stroke="#000" stroke-width="0.9"/>
<circle cx="901.6" cy="1193.7" r="6" fill="#ddd" stroke="#000" stroke-width="0.9"/>
<circle cx="891.1" cy="1199.7" r="6.2" fill="#1a1a1a" stroke="#000" stroke-width="1"/>
<rect x="1085.5" y="1039.5" width="1198.5" height="301.7" fill="#222"/>
<rect x="1087.5" y="1041.5" width="1194.5" height="35.0" fill="url(#thead)"/>
<rect x="1087.5" y="1076.6" width="1194.5" height="33.0" fill="#404040"/>
<text x="1101.7" y="1100.2" font-size="19.5" fill="#f0f0f0" font-weight="bold" textLength="67.8" lengthAdjust="spacingAndGlyphs">x: CIE31</text>
<text x="1264.8" y="1100.2" font-size="19.5" fill="#f0f0f0" textLength="53.0" lengthAdjust="spacingAndGlyphs">0.3333</text>
<text x="1357.8" y="1100.2" font-size="19.5" fill="#f0f0f0" textLength="53.0" lengthAdjust="spacingAndGlyphs">0.3124</text>
<text x="1450.8" y="1100.2" font-size="19.5" fill="#f0f0f0" textLength="53.0" lengthAdjust="spacingAndGlyphs">0.3152</text>
<text x="1543.8" y="1100.2" font-size="19.5" fill="#f0f0f0" textLength="53.0" lengthAdjust="spacingAndGlyphs">0.3144</text>
<text x="1636.8" y="1100.2" font-size="19.5" fill="#f0f0f0" textLength="53.0" lengthAdjust="spacingAndGlyphs">0.3154</text>
<text x="1729.8" y="1100.2" font-size="19.5" fill="#f0f0f0" textLength="53.0" lengthAdjust="spacingAndGlyphs">0.3156</text>
<text x="1822.8" y="1100.2" font-size="19.5" fill="#f0f0f0" textLength="53.0" lengthAdjust="spacingAndGlyphs">0.3154</text>
<text x="1915.8" y="1100.2" font-size="19.5" fill="#f0f0f0" textLength="53.0" lengthAdjust="spacingAndGlyphs">0.3155</text>
<text x="2008.8" y="1100.2" font-size="19.5" fill="#f0f0f0" textLength="53.0" lengthAdjust="spacingAndGlyphs">0.3150</text>
<text x="2101.8" y="1100.2" font-size="19.5" fill="#f0f0f0" textLength="53.0" lengthAdjust="spacingAndGlyphs">0.3139</text>
<text x="2194.8" y="1100.2" font-size="19.5" fill="#f0f0f0" textLength="53.0" lengthAdjust="spacingAndGlyphs">0.3124</text>
<rect x="1087.5" y="1109.5" width="1194.5" height="33.0" fill="#808080"/>
<text x="1101.7" y="1133.1" font-size="19.5" fill="#f0f0f0" font-weight="bold" textLength="67.8" lengthAdjust="spacingAndGlyphs">y: CIE31</text>
<text x="1264.8" y="1133.1" font-size="19.5" fill="#f0f0f0" textLength="53.0" lengthAdjust="spacingAndGlyphs">0.3333</text>
<text x="1357.8" y="1133.1" font-size="19.5" fill="#f0f0f0" textLength="53.0" lengthAdjust="spacingAndGlyphs">0.3286</text>
<text x="1450.8" y="1133.1" font-size="19.5" fill="#f0f0f0" textLength="53.0" lengthAdjust="spacingAndGlyphs">0.3343</text>
<text x="1543.8" y="1133.1" font-size="19.5" fill="#f0f0f0" textLength="53.0" lengthAdjust="spacingAndGlyphs">0.3302</text>
<text x="1636.8" y="1133.1" font-size="19.5" fill="#f0f0f0" textLength="53.0" lengthAdjust="spacingAndGlyphs">0.3298</text>
<text x="1729.8" y="1133.1" font-size="19.5" fill="#f0f0f0" textLength="53.0" lengthAdjust="spacingAndGlyphs">0.3298</text>
<text x="1822.8" y="1133.1" font-size="19.5" fill="#f0f0f0" textLength="53.0" lengthAdjust="spacingAndGlyphs">0.3298</text>
<text x="1915.8" y="1133.1" font-size="19.5" fill="#f0f0f0" textLength="53.0" lengthAdjust="spacingAndGlyphs">0.3279</text>
<text x="2008.8" y="1133.1" font-size="19.5" fill="#f0f0f0" textLength="53.0" lengthAdjust="spacingAndGlyphs">0.3281</text>
<text x="2101.8" y="1133.1" font-size="19.5" fill="#f0f0f0" textLength="53.0" lengthAdjust="spacingAndGlyphs">0.3300</text>
<text x="2194.8" y="1133.1" font-size="19.5" fill="#f0f0f0" textLength="53.0" lengthAdjust="spacingAndGlyphs">0.3325</text>
<rect x="1087.5" y="1142.5" width="1194.5" height="33.0" fill="#404040"/>
<text x="1101.7" y="1166.1" font-size="19.5" fill="#f0f0f0" font-weight="bold" textLength="11.3" lengthAdjust="spacingAndGlyphs">Y</text>
<text x="1264.8" y="1166.1" font-size="19.5" fill="#f0f0f0" textLength="53.0" lengthAdjust="spacingAndGlyphs">0.0000</text>
<text x="1357.8" y="1166.1" font-size="19.5" fill="#f0f0f0" textLength="53.0" lengthAdjust="spacingAndGlyphs">5.6718</text>
<text x="1450.8" y="1166.1" font-size="19.5" fill="#f0f0f0" textLength="63.0" lengthAdjust="spacingAndGlyphs">26.8724</text>
<text x="1543.8" y="1166.1" font-size="19.5" fill="#f0f0f0" textLength="63.0" lengthAdjust="spacingAndGlyphs">65.4262</text>
<text x="1636.8" y="1166.1" font-size="19.5" fill="#f0f0f0" textLength="72.9" lengthAdjust="spacingAndGlyphs">127.7860</text>
<text x="1729.8" y="1166.1" font-size="19.5" fill="#f0f0f0" textLength="72.9" lengthAdjust="spacingAndGlyphs">209.9471</text>
<text x="1822.8" y="1166.1" font-size="19.5" fill="#f0f0f0" textLength="72.9" lengthAdjust="spacingAndGlyphs">305.6302</text>
<text x="1915.8" y="1166.1" font-size="19.5" fill="#f0f0f0" textLength="72.9" lengthAdjust="spacingAndGlyphs">422.4714</text>
<text x="2008.8" y="1166.1" font-size="19.5" fill="#f0f0f0" textLength="72.9" lengthAdjust="spacingAndGlyphs">579.8575</text>
<text x="2101.8" y="1166.1" font-size="19.5" fill="#f0f0f0" textLength="72.9" lengthAdjust="spacingAndGlyphs">778.7489</text>
<text x="2194.8" y="1166.1" font-size="19.5" fill="#f0f0f0" textLength="82.9" lengthAdjust="spacingAndGlyphs">1008.1492</text>
<rect x="1087.5" y="1175.4" width="1194.5" height="33.0" fill="#808080"/>
<text x="1101.7" y="1199.0" font-size="19.5" fill="#f0f0f0" font-weight="bold" textLength="71.3" lengthAdjust="spacingAndGlyphs">Target Y</text>
<text x="1264.8" y="1199.0" font-size="19.5" fill="#f0f0f0" textLength="53.0" lengthAdjust="spacingAndGlyphs">0.0000</text>
<text x="1357.8" y="1199.0" font-size="19.5" fill="#f0f0f0" textLength="53.0" lengthAdjust="spacingAndGlyphs">6.6386</text>
<text x="1450.8" y="1199.0" font-size="19.5" fill="#f0f0f0" textLength="63.0" lengthAdjust="spacingAndGlyphs">29.2274</text>
<text x="1543.8" y="1199.0" font-size="19.5" fill="#f0f0f0" textLength="63.0" lengthAdjust="spacingAndGlyphs">70.2953</text>
<text x="1636.8" y="1199.0" font-size="19.5" fill="#f0f0f0" textLength="72.9" lengthAdjust="spacingAndGlyphs">134.2940</text>
<text x="1729.8" y="1199.0" font-size="19.5" fill="#f0f0f0" textLength="72.9" lengthAdjust="spacingAndGlyphs">221.3086</text>
<text x="1822.8" y="1199.0" font-size="19.5" fill="#f0f0f0" textLength="72.9" lengthAdjust="spacingAndGlyphs">327.6857</text>
<text x="1915.8" y="1199.0" font-size="19.5" fill="#f0f0f0" textLength="72.9" lengthAdjust="spacingAndGlyphs">457.1518</text>
<text x="2008.8" y="1199.0" font-size="19.5" fill="#f0f0f0" textLength="72.9" lengthAdjust="spacingAndGlyphs">617.0534</text>
<text x="2101.8" y="1199.0" font-size="19.5" fill="#f0f0f0" textLength="72.9" lengthAdjust="spacingAndGlyphs">803.4107</text>
<text x="2194.8" y="1199.0" font-size="19.5" fill="#f0f0f0" textLength="82.9" lengthAdjust="spacingAndGlyphs">1008.1492</text>
<rect x="1087.5" y="1208.4" width="1194.5" height="33.0" fill="#404040"/>
<text x="1101.7" y="1232.0" font-size="19.5" fill="#f0f0f0" font-weight="bold" textLength="144.3" lengthAdjust="spacingAndGlyphs">Gamma Log/Log</text>
<text x="1264.8" y="1232.0" font-size="19.5" fill="#f0f0f0" textLength="53.0" lengthAdjust="spacingAndGlyphs">2.2000</text>
<text x="1357.8" y="1232.0" font-size="19.5" fill="#f0f0f0" textLength="53.0" lengthAdjust="spacingAndGlyphs">2.2689</text>
<text x="1450.8" y="1232.0" font-size="19.5" fill="#f0f0f0" textLength="53.0" lengthAdjust="spacingAndGlyphs">2.2522</text>
<text x="1543.8" y="1232.0" font-size="19.5" fill="#f0f0f0" textLength="53.0" lengthAdjust="spacingAndGlyphs">2.2593</text>
<text x="1636.8" y="1232.0" font-size="19.5" fill="#f0f0f0" textLength="53.0" lengthAdjust="spacingAndGlyphs">2.2542</text>
<text x="1729.8" y="1232.0" font-size="19.5" fill="#f0f0f0" textLength="53.0" lengthAdjust="spacingAndGlyphs">2.2765</text>
<text x="1822.8" y="1232.0" font-size="19.5" fill="#f0f0f0" textLength="53.0" lengthAdjust="spacingAndGlyphs">2.3364</text>
<text x="1915.8" y="1232.0" font-size="19.5" fill="#f0f0f0" textLength="53.0" lengthAdjust="spacingAndGlyphs">2.4195</text>
<text x="2008.8" y="1232.0" font-size="19.5" fill="#f0f0f0" textLength="53.0" lengthAdjust="spacingAndGlyphs">2.4786</text>
<text x="2101.8" y="1232.0" font-size="19.5" fill="#f0f0f0" textLength="53.0" lengthAdjust="spacingAndGlyphs">2.5022</text>
<text x="2194.8" y="1232.0" font-size="19.5" fill="#f0f0f0" textLength="53.0" lengthAdjust="spacingAndGlyphs">2.2000</text>
<rect x="1087.5" y="1241.3" width="1194.5" height="33.0" fill="#808080"/>
<text x="1101.7" y="1264.9" font-size="19.5" fill="#f0f0f0" font-weight="bold" textLength="33.0" lengthAdjust="spacingAndGlyphs">CCT</text>
<text x="1264.8" y="1264.9" font-size="19.5" fill="#f0f0f0" textLength="82.9" lengthAdjust="spacingAndGlyphs">5456.0000</text>
<text x="1357.8" y="1264.9" font-size="19.5" fill="#f0f0f0" textLength="82.9" lengthAdjust="spacingAndGlyphs">6523.0000</text>
<text x="1450.8" y="1264.9" font-size="19.5" fill="#f0f0f0" textLength="82.9" lengthAdjust="spacingAndGlyphs">6337.0000</text>
<text x="1543.8" y="1264.9" font-size="19.5" fill="#f0f0f0" textLength="82.9" lengthAdjust="spacingAndGlyphs">6403.0000</text>
<text x="1636.8" y="1264.9" font-size="19.5" fill="#f0f0f0" textLength="82.9" lengthAdjust="spacingAndGlyphs">6355.0000</text>
<text x="1729.8" y="1264.9" font-size="19.5" fill="#f0f0f0" textLength="82.9" lengthAdjust="spacingAndGlyphs">6341.0000</text>
<text x="1822.8" y="1264.9" font-size="19.5" fill="#f0f0f0" textLength="82.9" lengthAdjust="spacingAndGlyphs">6354.0000</text>
<text x="1915.8" y="1264.9" font-size="19.5" fill="#f0f0f0" textLength="82.9" lengthAdjust="spacingAndGlyphs">6358.0000</text>
<text x="2008.8" y="1264.9" font-size="19.5" fill="#f0f0f0" textLength="82.9" lengthAdjust="spacingAndGlyphs">6385.0000</text>
<text x="2101.8" y="1264.9" font-size="19.5" fill="#f0f0f0" textLength="82.9" lengthAdjust="spacingAndGlyphs">6430.0000</text>
<text x="2194.8" y="1264.9" font-size="19.5" fill="#f0f0f0" textLength="82.9" lengthAdjust="spacingAndGlyphs">6493.0000</text>
<rect x="1087.5" y="1274.3" width="1194.5" height="33.0" fill="#404040"/>
<text x="1101.7" y="1297.9" font-size="19.5" fill="#f0f0f0" font-weight="bold" textLength="70.2" lengthAdjust="spacingAndGlyphs">ΔE 2000</text>
<text x="1264.8" y="1297.9" font-size="19.5" fill="#f0f0f0" textLength="53.0" lengthAdjust="spacingAndGlyphs">0.0000</text>
<text x="1357.8" y="1297.9" font-size="19.5" fill="#f0f0f0" textLength="53.0" lengthAdjust="spacingAndGlyphs">0.5216</text>
<text x="1450.8" y="1297.9" font-size="19.5" fill="#f0f0f0" textLength="53.0" lengthAdjust="spacingAndGlyphs">1.1586</text>
<text x="1543.8" y="1297.9" font-size="19.5" fill="#f0f0f0" textLength="53.0" lengthAdjust="spacingAndGlyphs">0.9569</text>
<text x="1636.8" y="1297.9" font-size="19.5" fill="#f0f0f0" textLength="53.0" lengthAdjust="spacingAndGlyphs">1.2354</text>
<text x="1729.8" y="1297.9" font-size="19.5" fill="#f0f0f0" textLength="53.0" lengthAdjust="spacingAndGlyphs">1.6337</text>
<text x="1822.8" y="1297.9" font-size="19.5" fill="#f0f0f0" textLength="53.0" lengthAdjust="spacingAndGlyphs">1.9266</text>
<text x="1915.8" y="1297.9" font-size="19.5" fill="#f0f0f0" textLength="53.0" lengthAdjust="spacingAndGlyphs">2.8224</text>
<text x="2008.8" y="1297.9" font-size="19.5" fill="#f0f0f0" textLength="53.0" lengthAdjust="spacingAndGlyphs">2.4130</text>
<text x="2101.8" y="1297.9" font-size="19.5" fill="#f0f0f0" textLength="53.0" lengthAdjust="spacingAndGlyphs">0.9089</text>
<text x="2194.8" y="1297.9" font-size="19.5" fill="#f0f0f0" textLength="53.0" lengthAdjust="spacingAndGlyphs">2.9023</text>
<rect x="1087.5" y="1307.2" width="1194.5" height="33.0" fill="#808080"/>
<text x="1101.7" y="1330.8" font-size="19.5" fill="#f0f0f0" font-weight="bold" textLength="56.0" lengthAdjust="spacingAndGlyphs">ΔE ITP</text>
<text x="1264.8" y="1330.8" font-size="19.5" fill="#f0f0f0" textLength="53.0" lengthAdjust="spacingAndGlyphs">0.0087</text>
<text x="1357.8" y="1330.8" font-size="19.5" fill="#f0f0f0" textLength="53.0" lengthAdjust="spacingAndGlyphs">8.2854</text>
<text x="1450.8" y="1330.8" font-size="19.5" fill="#f0f0f0" textLength="53.0" lengthAdjust="spacingAndGlyphs">5.8235</text>
<text x="1543.8" y="1330.8" font-size="19.5" fill="#f0f0f0" textLength="53.0" lengthAdjust="spacingAndGlyphs">5.1321</text>
<text x="1636.8" y="1330.8" font-size="19.5" fill="#f0f0f0" textLength="53.0" lengthAdjust="spacingAndGlyphs">3.9761</text>
<text x="1729.8" y="1330.8" font-size="19.5" fill="#f0f0f0" textLength="53.0" lengthAdjust="spacingAndGlyphs">4.3598</text>
<text x="1822.8" y="1330.8" font-size="19.5" fill="#f0f0f0" textLength="53.0" lengthAdjust="spacingAndGlyphs">5.5842</text>
<text x="1915.8" y="1330.8" font-size="19.5" fill="#f0f0f0" textLength="53.0" lengthAdjust="spacingAndGlyphs">6.4627</text>
<text x="2008.8" y="1330.8" font-size="19.5" fill="#f0f0f0" textLength="53.0" lengthAdjust="spacingAndGlyphs">5.1429</text>
<text x="2101.8" y="1330.8" font-size="19.5" fill="#f0f0f0" textLength="53.0" lengthAdjust="spacingAndGlyphs">2.5611</text>
<text x="2194.8" y="1330.8" font-size="19.5" fill="#f0f0f0" textLength="53.0" lengthAdjust="spacingAndGlyphs">1.7920</text>
<text x="1306.5" y="1065.3" font-size="17" fill="#f0f0f0" text-anchor="middle">0</text>
<text x="1399.6" y="1065.3" font-size="17" fill="#f0f0f0" text-anchor="middle">10</text>
<text x="1492.7" y="1065.3" font-size="17" fill="#f0f0f0" text-anchor="middle">20</text>
<text x="1585.8" y="1065.3" font-size="17" fill="#f0f0f0" text-anchor="middle">30</text>
<text x="1678.9" y="1065.3" font-size="17" fill="#f0f0f0" text-anchor="middle">40</text>
<text x="1772.0" y="1065.3" font-size="17" fill="#f0f0f0" text-anchor="middle">50</text>
<text x="1865.1" y="1065.3" font-size="17" fill="#f0f0f0" text-anchor="middle">60</text>
<text x="1958.2" y="1065.3" font-size="17" fill="#f0f0f0" text-anchor="middle">70</text>
<text x="2051.3" y="1065.3" font-size="17" fill="#f0f0f0" text-anchor="middle">80</text>
<text x="2144.4" y="1065.3" font-size="17" fill="#f0f0f0" text-anchor="middle">90</text>
<text x="2237.5" y="1065.3" font-size="17" fill="#f0f0f0" text-anchor="middle">100</text>
<rect x="200.0" y="1490.0" width="2356.0" height="62.0" fill="url(#bbar)"/>
<rect x="201" y="1490" width="150" height="62" rx="4" fill="url(#btn)"/>
<rect x="206" y="1494.7" width="140" height="36.3" rx="3" fill="#000000" stroke="#777" stroke-width="0.6"/>
<text x="276.0" y="1546.0" font-size="12.5" fill="#262626" text-anchor="middle">0</text>
<rect x="353" y="1490" width="150" height="62" rx="4" fill="url(#btn)"/>
<rect x="358" y="1494.7" width="140" height="36.3" rx="3" fill="#1a1a1a" stroke="#777" stroke-width="0.6"/>
<text x="428.0" y="1546.0" font-size="12.5" fill="#262626" text-anchor="middle">10</text>
<rect x="505" y="1490" width="150" height="62" rx="4" fill="url(#btn)"/>
<rect x="510" y="1494.7" width="140" height="36.3" rx="3" fill="#333333" stroke="#777" stroke-width="0.6"/>
<text x="580.0" y="1546.0" font-size="12.5" fill="#262626" text-anchor="middle">20</text>
<rect x="657" y="1490" width="150" height="62" rx="4" fill="url(#btn)"/>
<rect x="662" y="1494.7" width="140" height="36.3" rx="3" fill="#4d4d4d" stroke="#777" stroke-width="0.6"/>
<text x="732.0" y="1546.0" font-size="12.5" fill="#262626" text-anchor="middle">30</text>
<rect x="809" y="1490" width="150" height="62" rx="4" fill="url(#btn)"/>
<rect x="814" y="1494.7" width="140" height="36.3" rx="3" fill="#666666" stroke="#777" stroke-width="0.6"/>
<text x="884.0" y="1546.0" font-size="12.5" fill="#262626" text-anchor="middle">40</text>
<rect x="961" y="1490" width="150" height="62" rx="4" fill="url(#btn)"/>
<rect x="966" y="1494.7" width="140" height="36.3" rx="3" fill="#808080" stroke="#777" stroke-width="0.6"/>
<text x="1036.0" y="1546.0" font-size="12.5" fill="#262626" text-anchor="middle">50</text>
<rect x="1113" y="1490" width="150" height="62" rx="4" fill="url(#btn)"/>
<rect x="1118" y="1494.7" width="140" height="36.3" rx="3" fill="#999999" stroke="#777" stroke-width="0.6"/>
<text x="1188.0" y="1546.0" font-size="12.5" fill="#262626" text-anchor="middle">60</text>
<rect x="1265" y="1490" width="150" height="62" rx="4" fill="url(#btn)"/>
<rect x="1270" y="1494.7" width="140" height="36.3" rx="3" fill="#b3b3b3" stroke="#777" stroke-width="0.6"/>
<text x="1340.0" y="1546.0" font-size="12.5" fill="#262626" text-anchor="middle">70</text>
<rect x="1417" y="1490" width="150" height="62" rx="4" fill="url(#btn)"/>
<rect x="1422" y="1494.7" width="140" height="36.3" rx="3" fill="#cccccc" stroke="#777" stroke-width="0.6"/>
<text x="1492.0" y="1546.0" font-size="12.5" fill="#262626" text-anchor="middle">80</text>
<rect x="1569" y="1490" width="150" height="62" rx="4" fill="url(#selbtn)"/>
<rect x="1574" y="1494.7" width="140" height="36.3" rx="3" fill="#e6e6e6"/>
<text x="1644.0" y="1546.0" font-size="12.5" fill="#fff" font-weight="bold" text-anchor="middle">90</text>
<rect x="1721" y="1490" width="150" height="62" rx="4" fill="url(#btn)"/>
<rect x="1726" y="1494.7" width="140" height="36.3" rx="3" fill="#ffffff" stroke="#777" stroke-width="0.6"/>
<text x="1796.0" y="1546.0" font-size="12.5" fill="#262626" text-anchor="middle">100</text>
<rect x="2237" y="1510" width="48" height="42" rx="3" fill="url(#btn)"/>
<rect x="2246" y="1515.5" width="30" height="30" rx="3.5" fill="none" stroke="#1e1e1e" stroke-width="2.4"/>
<rect x="2254.3" y="1523.5" width="13.0" height="13.0" fill="#000"/>
<rect x="2285.6" y="1490" width="273" height="30" rx="3" fill="url(#btn)"/>
<line x1="2331.1" y1="1490.0" x2="2331.1" y2="1520.0" stroke="#555" stroke-width="1"/>
<line x1="2376.6" y1="1490.0" x2="2376.6" y2="1520.0" stroke="#555" stroke-width="1"/>
<line x1="2422.1" y1="1490.0" x2="2422.1" y2="1520.0" stroke="#555" stroke-width="1"/>
<line x1="2467.6" y1="1490.0" x2="2467.6" y2="1520.0" stroke="#555" stroke-width="1"/>
<line x1="2513.1" y1="1490.0" x2="2513.1" y2="1520.0" stroke="#555" stroke-width="1"/>
<circle cx="2308.3" cy="1508" r="8.5" fill="#7a7a7a" opacity="0.8"/>
<circle cx="2353.8" cy="1508" r="8.5" fill="#7a7a7a" opacity="0.8"/>
<circle cx="2399.3" cy="1508" r="8.5" fill="#7a7a7a" opacity="0.8"/>
<circle cx="2444.8" cy="1508" r="8.5" fill="#7a7a7a" opacity="0.8"/>
<circle cx="2490.3" cy="1508" r="8.5" fill="#7a7a7a" opacity="0.8"/>
<circle cx="2535.8" cy="1508" r="8.5" fill="#7a7a7a" opacity="0.8"/>
<rect x="2285.6" y="1520.7" width="273" height="31.3" rx="3" fill="url(#btn)"/>
<line x1="2422.0" y1="1521.0" x2="2422.0" y2="1552.0" stroke="#555" stroke-width="1"/>
<circle cx="2317.2" cy="1535.7" r="9.5" fill="#8c8c8c"/>
<circle cx="2530.2" cy="1535.7" r="9.5" fill="#8c8c8c"/>
<path d="M2316,1531 L2312,1535.7 L2316,1540.4 M2320.5,1531 L2316.5,1535.7 L2320.5,1540.4" fill="none" stroke="#222" stroke-width="1.3"/>
<path d="M2527.5,1531 L2531.5,1535.7 L2527.5,1540.4 M2532,1531 L2536,1535.7 L2532,1540.4" fill="none" stroke="#222" stroke-width="1.3"/>
<text x="2343.8" y="1543.2" font-size="20.5" fill="#2e2e2e" textLength="50.0" lengthAdjust="spacingAndGlyphs">Back</text>
<text x="2450.3" y="1543.2" font-size="20.5" fill="#2e2e2e" textLength="51.7" lengthAdjust="spacingAndGlyphs">Next</text>
<g opacity="0.9">
<path d="M2176,1471 L2222,1481 L2225.6,1510 L2187,1513.5 M2176,1471 L2178,1520 L2208.7,1535.5 L2262.6,1517.3 L2233,1511.5" fill="none" stroke="#c4c4c4" stroke-width="6.5" stroke-linejoin="round" stroke-linecap="round"/>
<path d="M2176,1471 L2222,1481 L2225.6,1510 L2187,1513.5 M2176,1471 L2178,1520 L2208.7,1535.5 L2262.6,1517.3 L2233,1511.5" fill="none" stroke="#7e2a30" stroke-width="4" stroke-linejoin="round" stroke-linecap="round"/>
<path d="M2188,1487.5 Q2194,1482.5 2199,1486 Q2203,1489 2206,1493.5 L2230.5,1467.5 Q2234,1466 2233.5,1469.5 L2206,1504 Q2204,1507.5 2202,1505 Q2196,1492 2188,1487.5 Z" fill="#2e2e2e" stroke="#c4c4c4" stroke-width="1.4" stroke-linejoin="round"/>
</g>
<text x="2234" y="1507.6" font-size="34.7" font-weight="bold" fill="#8a2a34" fill-opacity="0.82" stroke="#c8c8c8" stroke-width="2.6" paint-order="stroke" textLength="197" lengthAdjust="spacingAndGlyphs">NOTEBOOK</text>
<text x="2431" y="1507.6" font-size="34.7" font-weight="bold" fill="#2a2a2a" fill-opacity="0.75" stroke="#c8c8c8" stroke-width="2.6" paint-order="stroke" textLength="118" lengthAdjust="spacingAndGlyphs">CHECK</text>
</svg>
</body></html>
